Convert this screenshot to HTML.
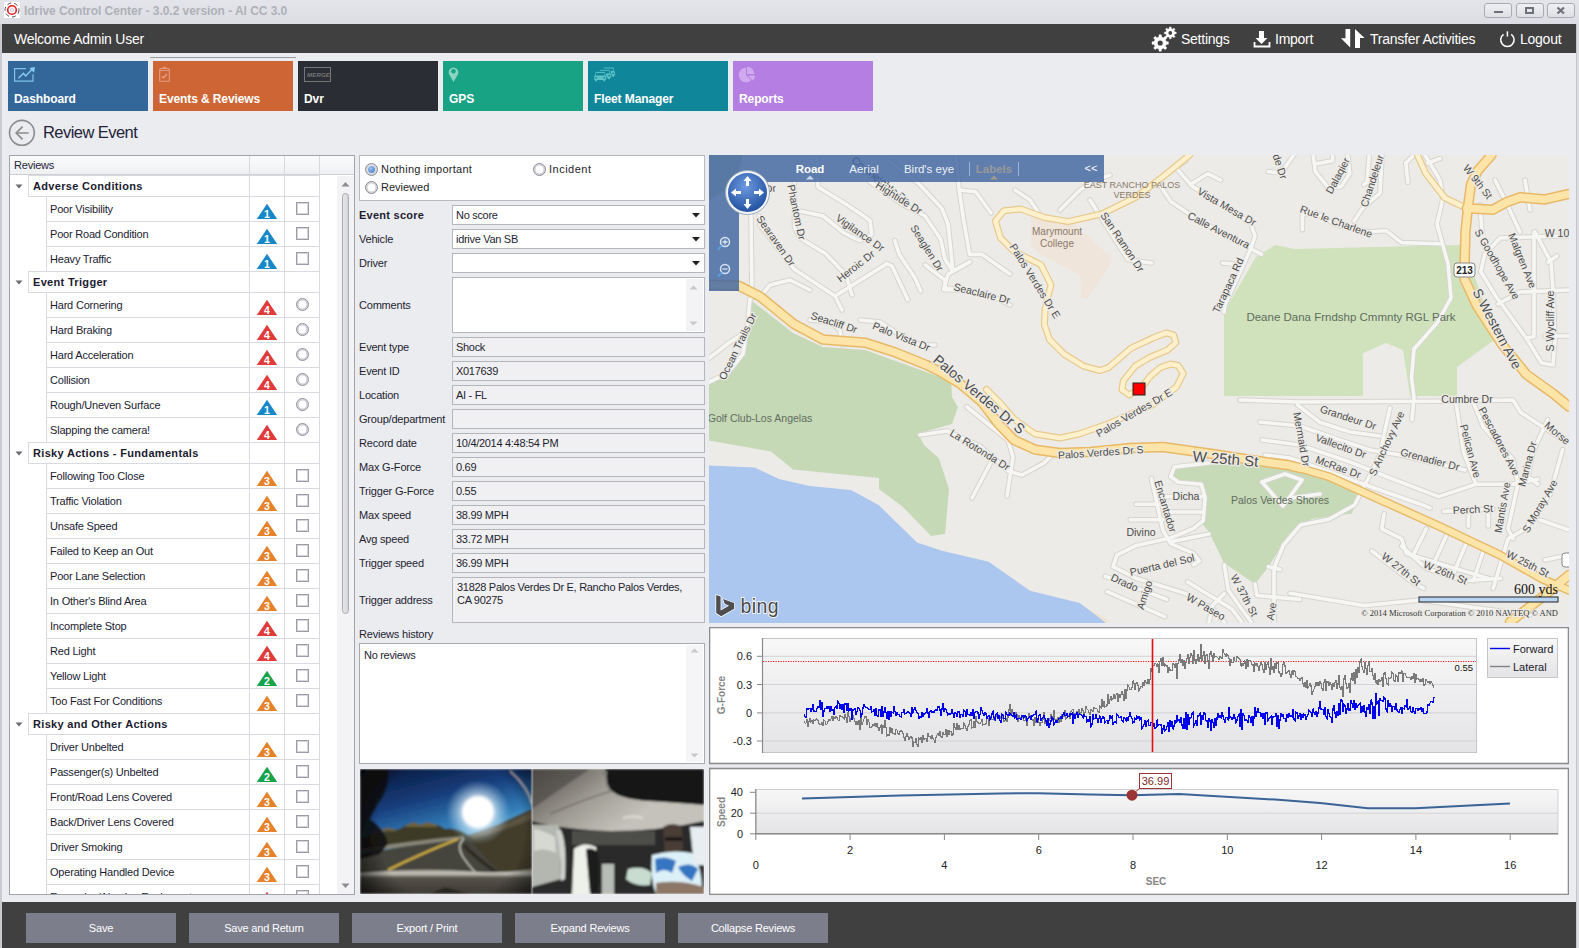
<!DOCTYPE html><html><head><meta charset='utf-8'><style>
*{box-sizing:border-box;margin:0;padding:0}
html,body{width:1579px;height:948px;overflow:hidden}
body{position:relative;background:#ebecf0;font-family:"Liberation Sans",sans-serif;font-size:11px;color:#1e1e28}
.a{position:absolute}
.t{position:absolute;white-space:nowrap;line-height:1}
</style></head><body>
<div class='a' style='left:0;top:0;width:1579px;height:24px;background:linear-gradient(#e4e5ea,#dcdde2)'></div>
<div class='a' style='left:4px;top:2px;width:16px;height:16px;background:#fff'></div>
<svg class='a' style='left:3px;top:1px' width='18' height='18'><circle cx='9' cy='9' r='7' fill='none' stroke='#555' stroke-width='1' stroke-dasharray='4 3'/><circle cx='9' cy='9' r='4.3' fill='none' stroke='#e21b23' stroke-width='1.6'/><circle cx='9' cy='9' r='1.5' fill='none' stroke='#bbb' stroke-width='0.8'/></svg>
<div class='t' style='left:24px;top:5px;font-size:12px;font-weight:bold;color:#aeb1b8;letter-spacing:-0.05px'>Idrive Control Center - 3.0.2 version - AI CC 3.0</div>
<div class='a' style='left:1484px;top:3px;width:28px;height:15px;border:1px solid #a9abb2;border-radius:3px;background:linear-gradient(#eeeff2,#dfe0e5)'></div>
<div class='a' style='left:1516px;top:3px;width:28px;height:15px;border:1px solid #a9abb2;border-radius:3px;background:linear-gradient(#eeeff2,#dfe0e5)'></div>
<div class='a' style='left:1547px;top:3px;width:28px;height:15px;border:1px solid #a9abb2;border-radius:3px;background:linear-gradient(#eeeff2,#dfe0e5)'></div>
<div class='a' style='left:1494px;top:11px;width:9px;height:2px;background:#6e717a'></div>
<div class='a' style='left:1525px;top:7px;width:9px;height:7px;border:2px solid #6e717a'></div>
<svg class='a' style='left:1555px;top:5px' width='12' height='11'><path d='M2.5 2.5 L9 8.5 M9 2.5 L2.5 8.5' stroke='#6e717a' stroke-width='2.2'/></svg>
<div class='a' style='left:0;top:24px;width:2px;height:924px;background:#c9cacf'></div>
<div class='a' style='left:1576px;top:24px;width:3px;height:924px;background:#dcdde2;border-left:1px solid #c4c5cb'></div>
<div class='a' style='left:2px;top:24px;width:1574px;height:29px;background:#404040'></div>
<div class='t' style='left:14px;top:32px;font-size:14px;color:#fff;letter-spacing:-0.25px'>Welcome Admin User</div>
<div class='t' style='left:1181px;top:32px;font-size:14px;color:#fff;letter-spacing:-0.25px'>Settings</div>
<div class='t' style='left:1275px;top:32px;font-size:14px;color:#fff;letter-spacing:-0.25px'>Import</div>
<div class='t' style='left:1370px;top:32px;font-size:14px;color:#fff;letter-spacing:-0.25px'>Transfer Activities</div>
<div class='t' style='left:1520px;top:32px;font-size:14px;color:#fff;letter-spacing:-0.25px'>Logout</div>
<svg class='a' style='left:1145px;top:24px' width='40' height='30' viewBox='1145 24 40 30'><polygon points='1158.82,37.02 1159.04,34.78 1161.36,34.78 1161.58,37.02 1163.45,37.79 1165.20,36.37 1166.83,38.00 1165.41,39.75 1166.18,41.62 1168.42,41.84 1168.42,44.16 1166.18,44.38 1165.41,46.25 1166.83,48.00 1165.20,49.63 1163.45,48.21 1161.58,48.98 1161.36,51.22 1159.04,51.22 1158.82,48.98 1156.95,48.21 1155.20,49.63 1153.57,48.00 1154.99,46.25 1154.22,44.38 1151.98,44.16 1151.98,41.84 1154.22,41.62 1154.99,39.75 1153.57,38.00 1155.20,36.37 1156.95,37.79' fill='#fff' stroke='#fff' stroke-width='0.4' stroke-linejoin='round'/><circle cx='1160.2' cy='43' r='2.6' fill='#404040'/><polygon points='1169.30,28.57 1169.46,26.96 1171.14,26.96 1171.30,28.57 1172.65,29.13 1173.91,28.11 1175.09,29.29 1174.07,30.55 1174.63,31.90 1176.24,32.06 1176.24,33.74 1174.63,33.90 1174.07,35.25 1175.09,36.51 1173.91,37.69 1172.65,36.67 1171.30,37.23 1171.14,38.84 1169.46,38.84 1169.30,37.23 1167.95,36.67 1166.69,37.69 1165.51,36.51 1166.53,35.25 1165.97,33.90 1164.36,33.74 1164.36,32.06 1165.97,31.90 1166.53,30.55 1165.51,29.29 1166.69,28.11 1167.95,29.13' fill='#fff' stroke='#fff' stroke-width='0.4' stroke-linejoin='round'/><circle cx='1170.3' cy='32.9' r='1.9' fill='#404040'/></svg>
<svg class='a' style='left:1252px;top:29px' width='20' height='20'><path d='M7 2h5v7h3.5l-6 6-6-6H7z' fill='#fff'/><path d='M2.5 13v4.5h15V13' fill='none' stroke='#fff' stroke-width='1.8'/></svg>
<svg class='a' style='left:1336px;top:24px' width='34' height='30' viewBox='1336 24 34 30'><path d='M1345.5 29H1350.2V47.4L1341 38.3H1345.5z' fill='#fff'/><path d='M1355 29L1364.6 38H1360V48H1355z' fill='#fff'/></svg>
<svg class='a' style='left:1494px;top:24px' width='30' height='30' viewBox='1494 24 30 30'><path d='M1503.56 34.31A6.7 6.7 0 1 0 1511.24 34.31' fill='none' stroke='#fff' stroke-width='1.5'/><path d='M1507.4 31.3V36.6' stroke='#fff' stroke-width='1.5'/></svg>
<div class='a' style='left:8px;top:61px;width:140px;height:50px;background:#336699'></div>
<div class='t' style='left:14px;top:93px;font-size:12px;font-weight:bold;color:#fff;letter-spacing:-0.1px'>Dashboard</div>
<div class='a' style='left:153px;top:61px;width:140px;height:50px;background:#cd6634'></div>
<div class='t' style='left:159px;top:93px;font-size:12px;font-weight:bold;color:#fff;letter-spacing:-0.1px'>Events &amp; Reviews</div>
<div class='a' style='left:298px;top:61px;width:140px;height:50px;background:#2a2d33'></div>
<div class='t' style='left:304px;top:93px;font-size:12px;font-weight:bold;color:#fff;letter-spacing:-0.1px'>Dvr</div>
<div class='a' style='left:443px;top:61px;width:140px;height:50px;background:#19a385'></div>
<div class='t' style='left:449px;top:93px;font-size:12px;font-weight:bold;color:#fff;letter-spacing:-0.1px'>GPS</div>
<div class='a' style='left:588px;top:61px;width:140px;height:50px;background:#0f869a'></div>
<div class='t' style='left:594px;top:93px;font-size:12px;font-weight:bold;color:#fff;letter-spacing:-0.1px'>Fleet Manager</div>
<div class='a' style='left:733px;top:61px;width:140px;height:50px;background:#b57ee3'></div>
<div class='t' style='left:739px;top:93px;font-size:12px;font-weight:bold;color:#fff;letter-spacing:-0.1px'>Reports</div>
<div class='a' style='left:150px;top:57px;width:146px;height:1px;background:#9a9ba0'></div>
<svg class='a' style='left:8px;top:61px' width='40' height='30' viewBox='8 61 40 30'><path d='M26 68.6H14.6V81.2H33V74.3' fill='none' stroke='#7dc3ea' stroke-width='1.2'/><path d='M18.4 78.2L23.5 73.3 25.6 76 32.5 69' fill='none' stroke='#88cdf2' stroke-width='1.4'/><path d='M35 67 L29.3 67.9 34.1 72.7z' fill='#88cdf2'/></svg>
<svg class='a' style='left:150px;top:61px' width='40' height='30' viewBox='150 61 40 30'><path d='M159.7 69.5V81.2H169.3V69.5L168.3 68.5H160.7z' fill='none' stroke='#e59c84' stroke-width='1.1'/><path d='M160 70.5H169' stroke='#e59c84' stroke-width='1'/><rect x='163' y='66.8' width='3' height='1.6' fill='#e59c84'/><path d='M161.9 76.2L163.6 77.8 166.9 74' fill='none' stroke='#e8a590' stroke-width='1.2'/></svg>
<div class='a' style='left:304px;top:67px;width:27px;height:15px;border:1px solid #777'></div>
<div class='t' style='left:307px;top:72px;font-size:6px;font-style:italic;font-weight:bold;color:#777;letter-spacing:0.2px'>MERGE</div>
<svg class='a' style='left:447px;top:66px' width='14' height='18'><path d='M6.5 16 L2.2 8.5 A4.8 4.8 0 1 1 10.8 8.5z' fill='#8ad5c2'/><circle cx='6.5' cy='5.3' r='2.3' fill='#19a385'/></svg>
<svg class='a' style='left:585px;top:61px' width='40' height='30' viewBox='585 61 40 30'><g transform='translate(602.5 66.5)'><path d='M1.8 0.6H10.2Q11.2 0.6 11.5 1.8L12.2 4.6Q12.8 5.2 12.8 6.5V9.6H11.6V11H9.4V9.6H3.4V11H1.2V9.6H0V6.5Q0 5.2 0.6 4.6L1.3 1.8Q1.6 0.6 1.8 0.6z' fill='#5ec3c6' stroke='#0f869a' stroke-width='0.9'/><path d='M2.4 1.9H10.4L11 4.6H1.8z' fill='#0f869a'/><circle cx='2.3' cy='6.8' r='0.9' fill='#0f869a'/><circle cx='10.5' cy='6.8' r='0.9' fill='#0f869a'/></g><g transform='translate(598.5 68.8)'><path d='M1.8 0.6H10.2Q11.2 0.6 11.5 1.8L12.2 4.6Q12.8 5.2 12.8 6.5V9.6H11.6V11H9.4V9.6H3.4V11H1.2V9.6H0V6.5Q0 5.2 0.6 4.6L1.3 1.8Q1.6 0.6 1.8 0.6z' fill='#5ec3c6' stroke='#0f869a' stroke-width='0.9'/><path d='M2.4 1.9H10.4L11 4.6H1.8z' fill='#0f869a'/><circle cx='2.3' cy='6.8' r='0.9' fill='#0f869a'/><circle cx='10.5' cy='6.8' r='0.9' fill='#0f869a'/></g><g transform='translate(593.8 71)'><path d='M1.8 0.6H10.2Q11.2 0.6 11.5 1.8L12.2 4.6Q12.8 5.2 12.8 6.5V9.6H11.6V11H9.4V9.6H3.4V11H1.2V9.6H0V6.5Q0 5.2 0.6 4.6L1.3 1.8Q1.6 0.6 1.8 0.6z' fill='#5ec3c6' stroke='#0f869a' stroke-width='0.9'/><path d='M2.4 1.9H10.4L11 4.6H1.8z' fill='#0f869a'/><circle cx='2.3' cy='6.8' r='0.9' fill='#0f869a'/><circle cx='10.5' cy='6.8' r='0.9' fill='#0f869a'/></g></svg>
<svg class='a' style='left:730px;top:61px' width='30' height='30' viewBox='730 61 30 30'><path d='M746 75V67.7A7.3 7.3 0 1 0 751.2 80.2z' fill='#d0aaee'/><path d='M747 74V66.7A7.3 7.3 0 0 1 754.3 74z' fill='#d0aaee'/><path d='M747.8 75.6H755A7.3 7.3 0 0 1 753 80.8z' fill='#d0aaee'/></svg>
<svg class='a' style='left:4px;top:116px' width='36' height='34' viewBox='4 116 36 34'><circle cx='21.9' cy='132.8' r='12.4' fill='none' stroke='#8c8c8c' stroke-width='1.6'/><path d='M28.7 133H16 M22.6 126.6 L16.2 133 L22.6 139.4' fill='none' stroke='#8c8c8c' stroke-width='1.7'/></svg>
<div class='t' style='left:43px;top:124px;font-size:16.5px;color:#23233a;letter-spacing:-0.55px'>Review Event</div>
<div class='a' style='left:9px;top:155px;width:346px;height:740px;border:1px solid #a3a4ab;background:#fff;overflow:hidden'>
<div class='a' style='left:0;top:0;width:344px;height:19px;background:linear-gradient(#fbfbfc,#eef0f3);border-bottom:1px solid #cfd0d6'></div>
<div class='t' style='left:4px;top:4px;font-size:11px;color:#24243a;letter-spacing:-0.2px'>Reviews</div>
<div class='a' style='left:239px;top:0;width:1px;height:19px;background:#d6d7dc'></div>
<div class='a' style='left:274px;top:0;width:1px;height:19px;background:#d6d7dc'></div>
<div class='a' style='left:309px;top:0;width:1px;height:19px;background:#d6d7dc'></div>
<div class='a' style='left:309px;top:19px;width:35px;height:720px;background:#fff'></div>
<div class='a' style='left:18px;top:19px;width:222px;height:22px;border:1px solid #d9dadf'></div>
<div class='a' style='left:239px;top:19px;width:36px;height:22px;border:1px solid #d9dadf'></div>
<div class='a' style='left:274px;top:19px;width:36px;height:22px;border:1px solid #d9dadf'></div>
<svg class='a' style='left:5px;top:28px' width='8' height='5'><path d='M0.5 0.5h7l-3.5 4z' fill='#6b6b70'/></svg>
<div class='t' style='left:23px;top:24.5px;font-size:11px;font-weight:bold;color:#1b1b30;letter-spacing:0.32px'>Adverse Conditions</div>
<div class='a' style='left:36px;top:40px;width:204px;height:26px;border:1px solid #d9dadf'></div>
<div class='a' style='left:239px;top:40px;width:36px;height:26px;border:1px solid #d9dadf'></div>
<div class='a' style='left:274px;top:40px;width:36px;height:26px;border:1px solid #d9dadf'></div>
<div class='t' style='left:40px;top:48px;font-size:11px;color:#1b1b30;letter-spacing:-0.2px'>Poor Visibility</div>
<svg class='a' style='left:246px;top:47px' width='22' height='17'><path d='M11 0.8 L21.2 16 H0.8z' fill='#1688c9'/><text x='11' y='15.2' font-size='10.5' font-weight='bold' fill='#fff' text-anchor='middle' font-family='Liberation Sans'>1</text></svg>
<div class='a' style='left:286px;top:46px;width:13px;height:13px;border:1px solid #9c9ca4;background:#fff;box-shadow:inset 0 0 0 1px #d6d6dc'></div>
<div class='a' style='left:36px;top:65px;width:204px;height:26px;border:1px solid #d9dadf'></div>
<div class='a' style='left:239px;top:65px;width:36px;height:26px;border:1px solid #d9dadf'></div>
<div class='a' style='left:274px;top:65px;width:36px;height:26px;border:1px solid #d9dadf'></div>
<div class='t' style='left:40px;top:73px;font-size:11px;color:#1b1b30;letter-spacing:-0.2px'>Poor Road Condition</div>
<svg class='a' style='left:246px;top:72px' width='22' height='17'><path d='M11 0.8 L21.2 16 H0.8z' fill='#1688c9'/><text x='11' y='15.2' font-size='10.5' font-weight='bold' fill='#fff' text-anchor='middle' font-family='Liberation Sans'>1</text></svg>
<div class='a' style='left:286px;top:71px;width:13px;height:13px;border:1px solid #9c9ca4;background:#fff;box-shadow:inset 0 0 0 1px #d6d6dc'></div>
<div class='a' style='left:36px;top:90px;width:204px;height:26px;border:1px solid #d9dadf'></div>
<div class='a' style='left:239px;top:90px;width:36px;height:26px;border:1px solid #d9dadf'></div>
<div class='a' style='left:274px;top:90px;width:36px;height:26px;border:1px solid #d9dadf'></div>
<div class='t' style='left:40px;top:98px;font-size:11px;color:#1b1b30;letter-spacing:-0.2px'>Heavy Traffic</div>
<svg class='a' style='left:246px;top:97px' width='22' height='17'><path d='M11 0.8 L21.2 16 H0.8z' fill='#1688c9'/><text x='11' y='15.2' font-size='10.5' font-weight='bold' fill='#fff' text-anchor='middle' font-family='Liberation Sans'>1</text></svg>
<div class='a' style='left:286px;top:96px;width:13px;height:13px;border:1px solid #9c9ca4;background:#fff;box-shadow:inset 0 0 0 1px #d6d6dc'></div>
<div class='a' style='left:18px;top:115px;width:222px;height:22px;border:1px solid #d9dadf'></div>
<div class='a' style='left:239px;top:115px;width:36px;height:22px;border:1px solid #d9dadf'></div>
<div class='a' style='left:274px;top:115px;width:36px;height:22px;border:1px solid #d9dadf'></div>
<svg class='a' style='left:5px;top:124px' width='8' height='5'><path d='M0.5 0.5h7l-3.5 4z' fill='#6b6b70'/></svg>
<div class='t' style='left:23px;top:120.5px;font-size:11px;font-weight:bold;color:#1b1b30;letter-spacing:0.32px'>Event Trigger</div>
<div class='a' style='left:36px;top:136px;width:204px;height:26px;border:1px solid #d9dadf'></div>
<div class='a' style='left:239px;top:136px;width:36px;height:26px;border:1px solid #d9dadf'></div>
<div class='a' style='left:274px;top:136px;width:36px;height:26px;border:1px solid #d9dadf'></div>
<div class='t' style='left:40px;top:144px;font-size:11px;color:#1b1b30;letter-spacing:-0.2px'>Hard Cornering</div>
<svg class='a' style='left:246px;top:143px' width='22' height='17'><path d='M11 0.8 L21.2 16 H0.8z' fill='#e03a3a'/><text x='11' y='15.2' font-size='10.5' font-weight='bold' fill='#fff' text-anchor='middle' font-family='Liberation Sans'>4</text></svg>
<div class='a' style='left:286px;top:142px;width:13px;height:13px;border:1px solid #8e8e96;border-radius:50%;background:#fff;box-shadow:inset 0 0 0 1.6px #cdced6'></div>
<div class='a' style='left:36px;top:161px;width:204px;height:26px;border:1px solid #d9dadf'></div>
<div class='a' style='left:239px;top:161px;width:36px;height:26px;border:1px solid #d9dadf'></div>
<div class='a' style='left:274px;top:161px;width:36px;height:26px;border:1px solid #d9dadf'></div>
<div class='t' style='left:40px;top:169px;font-size:11px;color:#1b1b30;letter-spacing:-0.2px'>Hard Braking</div>
<svg class='a' style='left:246px;top:168px' width='22' height='17'><path d='M11 0.8 L21.2 16 H0.8z' fill='#e03a3a'/><text x='11' y='15.2' font-size='10.5' font-weight='bold' fill='#fff' text-anchor='middle' font-family='Liberation Sans'>4</text></svg>
<div class='a' style='left:286px;top:167px;width:13px;height:13px;border:1px solid #8e8e96;border-radius:50%;background:#fff;box-shadow:inset 0 0 0 1.6px #cdced6'></div>
<div class='a' style='left:36px;top:186px;width:204px;height:26px;border:1px solid #d9dadf'></div>
<div class='a' style='left:239px;top:186px;width:36px;height:26px;border:1px solid #d9dadf'></div>
<div class='a' style='left:274px;top:186px;width:36px;height:26px;border:1px solid #d9dadf'></div>
<div class='t' style='left:40px;top:194px;font-size:11px;color:#1b1b30;letter-spacing:-0.2px'>Hard Acceleration</div>
<svg class='a' style='left:246px;top:193px' width='22' height='17'><path d='M11 0.8 L21.2 16 H0.8z' fill='#e03a3a'/><text x='11' y='15.2' font-size='10.5' font-weight='bold' fill='#fff' text-anchor='middle' font-family='Liberation Sans'>4</text></svg>
<div class='a' style='left:286px;top:192px;width:13px;height:13px;border:1px solid #8e8e96;border-radius:50%;background:#fff;box-shadow:inset 0 0 0 1.6px #cdced6'></div>
<div class='a' style='left:36px;top:211px;width:204px;height:26px;border:1px solid #d9dadf'></div>
<div class='a' style='left:239px;top:211px;width:36px;height:26px;border:1px solid #d9dadf'></div>
<div class='a' style='left:274px;top:211px;width:36px;height:26px;border:1px solid #d9dadf'></div>
<div class='t' style='left:40px;top:219px;font-size:11px;color:#1b1b30;letter-spacing:-0.2px'>Collision</div>
<svg class='a' style='left:246px;top:218px' width='22' height='17'><path d='M11 0.8 L21.2 16 H0.8z' fill='#e03a3a'/><text x='11' y='15.2' font-size='10.5' font-weight='bold' fill='#fff' text-anchor='middle' font-family='Liberation Sans'>4</text></svg>
<div class='a' style='left:286px;top:217px;width:13px;height:13px;border:1px solid #8e8e96;border-radius:50%;background:#fff;box-shadow:inset 0 0 0 1.6px #cdced6'></div>
<div class='a' style='left:36px;top:236px;width:204px;height:26px;border:1px solid #d9dadf'></div>
<div class='a' style='left:239px;top:236px;width:36px;height:26px;border:1px solid #d9dadf'></div>
<div class='a' style='left:274px;top:236px;width:36px;height:26px;border:1px solid #d9dadf'></div>
<div class='t' style='left:40px;top:244px;font-size:11px;color:#1b1b30;letter-spacing:-0.2px'>Rough/Uneven Surface</div>
<svg class='a' style='left:246px;top:243px' width='22' height='17'><path d='M11 0.8 L21.2 16 H0.8z' fill='#1688c9'/><text x='11' y='15.2' font-size='10.5' font-weight='bold' fill='#fff' text-anchor='middle' font-family='Liberation Sans'>1</text></svg>
<div class='a' style='left:286px;top:242px;width:13px;height:13px;border:1px solid #8e8e96;border-radius:50%;background:#fff;box-shadow:inset 0 0 0 1.6px #cdced6'></div>
<div class='a' style='left:36px;top:261px;width:204px;height:26px;border:1px solid #d9dadf'></div>
<div class='a' style='left:239px;top:261px;width:36px;height:26px;border:1px solid #d9dadf'></div>
<div class='a' style='left:274px;top:261px;width:36px;height:26px;border:1px solid #d9dadf'></div>
<div class='t' style='left:40px;top:269px;font-size:11px;color:#1b1b30;letter-spacing:-0.2px'>Slapping the camera!</div>
<svg class='a' style='left:246px;top:268px' width='22' height='17'><path d='M11 0.8 L21.2 16 H0.8z' fill='#e03a3a'/><text x='11' y='15.2' font-size='10.5' font-weight='bold' fill='#fff' text-anchor='middle' font-family='Liberation Sans'>4</text></svg>
<div class='a' style='left:286px;top:267px;width:13px;height:13px;border:1px solid #8e8e96;border-radius:50%;background:#fff;box-shadow:inset 0 0 0 1.6px #cdced6'></div>
<div class='a' style='left:18px;top:286px;width:222px;height:22px;border:1px solid #d9dadf'></div>
<div class='a' style='left:239px;top:286px;width:36px;height:22px;border:1px solid #d9dadf'></div>
<div class='a' style='left:274px;top:286px;width:36px;height:22px;border:1px solid #d9dadf'></div>
<svg class='a' style='left:5px;top:295px' width='8' height='5'><path d='M0.5 0.5h7l-3.5 4z' fill='#6b6b70'/></svg>
<div class='t' style='left:23px;top:291.5px;font-size:11px;font-weight:bold;color:#1b1b30;letter-spacing:0.32px'>Risky Actions - Fundamentals</div>
<div class='a' style='left:36px;top:307px;width:204px;height:26px;border:1px solid #d9dadf'></div>
<div class='a' style='left:239px;top:307px;width:36px;height:26px;border:1px solid #d9dadf'></div>
<div class='a' style='left:274px;top:307px;width:36px;height:26px;border:1px solid #d9dadf'></div>
<div class='t' style='left:40px;top:315px;font-size:11px;color:#1b1b30;letter-spacing:-0.2px'>Following Too Close</div>
<svg class='a' style='left:246px;top:314px' width='22' height='17'><path d='M11 0.8 L21.2 16 H0.8z' fill='#e5822b'/><text x='11' y='15.2' font-size='10.5' font-weight='bold' fill='#fff' text-anchor='middle' font-family='Liberation Sans'>3</text></svg>
<div class='a' style='left:286px;top:313px;width:13px;height:13px;border:1px solid #9c9ca4;background:#fff;box-shadow:inset 0 0 0 1px #d6d6dc'></div>
<div class='a' style='left:36px;top:332px;width:204px;height:26px;border:1px solid #d9dadf'></div>
<div class='a' style='left:239px;top:332px;width:36px;height:26px;border:1px solid #d9dadf'></div>
<div class='a' style='left:274px;top:332px;width:36px;height:26px;border:1px solid #d9dadf'></div>
<div class='t' style='left:40px;top:340px;font-size:11px;color:#1b1b30;letter-spacing:-0.2px'>Traffic Violation</div>
<svg class='a' style='left:246px;top:339px' width='22' height='17'><path d='M11 0.8 L21.2 16 H0.8z' fill='#e5822b'/><text x='11' y='15.2' font-size='10.5' font-weight='bold' fill='#fff' text-anchor='middle' font-family='Liberation Sans'>3</text></svg>
<div class='a' style='left:286px;top:338px;width:13px;height:13px;border:1px solid #9c9ca4;background:#fff;box-shadow:inset 0 0 0 1px #d6d6dc'></div>
<div class='a' style='left:36px;top:357px;width:204px;height:26px;border:1px solid #d9dadf'></div>
<div class='a' style='left:239px;top:357px;width:36px;height:26px;border:1px solid #d9dadf'></div>
<div class='a' style='left:274px;top:357px;width:36px;height:26px;border:1px solid #d9dadf'></div>
<div class='t' style='left:40px;top:365px;font-size:11px;color:#1b1b30;letter-spacing:-0.2px'>Unsafe Speed</div>
<svg class='a' style='left:246px;top:364px' width='22' height='17'><path d='M11 0.8 L21.2 16 H0.8z' fill='#e5822b'/><text x='11' y='15.2' font-size='10.5' font-weight='bold' fill='#fff' text-anchor='middle' font-family='Liberation Sans'>3</text></svg>
<div class='a' style='left:286px;top:363px;width:13px;height:13px;border:1px solid #9c9ca4;background:#fff;box-shadow:inset 0 0 0 1px #d6d6dc'></div>
<div class='a' style='left:36px;top:382px;width:204px;height:26px;border:1px solid #d9dadf'></div>
<div class='a' style='left:239px;top:382px;width:36px;height:26px;border:1px solid #d9dadf'></div>
<div class='a' style='left:274px;top:382px;width:36px;height:26px;border:1px solid #d9dadf'></div>
<div class='t' style='left:40px;top:390px;font-size:11px;color:#1b1b30;letter-spacing:-0.2px'>Failed to Keep an Out</div>
<svg class='a' style='left:246px;top:389px' width='22' height='17'><path d='M11 0.8 L21.2 16 H0.8z' fill='#e5822b'/><text x='11' y='15.2' font-size='10.5' font-weight='bold' fill='#fff' text-anchor='middle' font-family='Liberation Sans'>3</text></svg>
<div class='a' style='left:286px;top:388px;width:13px;height:13px;border:1px solid #9c9ca4;background:#fff;box-shadow:inset 0 0 0 1px #d6d6dc'></div>
<div class='a' style='left:36px;top:407px;width:204px;height:26px;border:1px solid #d9dadf'></div>
<div class='a' style='left:239px;top:407px;width:36px;height:26px;border:1px solid #d9dadf'></div>
<div class='a' style='left:274px;top:407px;width:36px;height:26px;border:1px solid #d9dadf'></div>
<div class='t' style='left:40px;top:415px;font-size:11px;color:#1b1b30;letter-spacing:-0.2px'>Poor Lane Selection</div>
<svg class='a' style='left:246px;top:414px' width='22' height='17'><path d='M11 0.8 L21.2 16 H0.8z' fill='#e5822b'/><text x='11' y='15.2' font-size='10.5' font-weight='bold' fill='#fff' text-anchor='middle' font-family='Liberation Sans'>3</text></svg>
<div class='a' style='left:286px;top:413px;width:13px;height:13px;border:1px solid #9c9ca4;background:#fff;box-shadow:inset 0 0 0 1px #d6d6dc'></div>
<div class='a' style='left:36px;top:432px;width:204px;height:26px;border:1px solid #d9dadf'></div>
<div class='a' style='left:239px;top:432px;width:36px;height:26px;border:1px solid #d9dadf'></div>
<div class='a' style='left:274px;top:432px;width:36px;height:26px;border:1px solid #d9dadf'></div>
<div class='t' style='left:40px;top:440px;font-size:11px;color:#1b1b30;letter-spacing:-0.2px'>In Other's Blind Area</div>
<svg class='a' style='left:246px;top:439px' width='22' height='17'><path d='M11 0.8 L21.2 16 H0.8z' fill='#e5822b'/><text x='11' y='15.2' font-size='10.5' font-weight='bold' fill='#fff' text-anchor='middle' font-family='Liberation Sans'>3</text></svg>
<div class='a' style='left:286px;top:438px;width:13px;height:13px;border:1px solid #9c9ca4;background:#fff;box-shadow:inset 0 0 0 1px #d6d6dc'></div>
<div class='a' style='left:36px;top:457px;width:204px;height:26px;border:1px solid #d9dadf'></div>
<div class='a' style='left:239px;top:457px;width:36px;height:26px;border:1px solid #d9dadf'></div>
<div class='a' style='left:274px;top:457px;width:36px;height:26px;border:1px solid #d9dadf'></div>
<div class='t' style='left:40px;top:465px;font-size:11px;color:#1b1b30;letter-spacing:-0.2px'>Incomplete Stop</div>
<svg class='a' style='left:246px;top:464px' width='22' height='17'><path d='M11 0.8 L21.2 16 H0.8z' fill='#e03a3a'/><text x='11' y='15.2' font-size='10.5' font-weight='bold' fill='#fff' text-anchor='middle' font-family='Liberation Sans'>4</text></svg>
<div class='a' style='left:286px;top:463px;width:13px;height:13px;border:1px solid #9c9ca4;background:#fff;box-shadow:inset 0 0 0 1px #d6d6dc'></div>
<div class='a' style='left:36px;top:482px;width:204px;height:26px;border:1px solid #d9dadf'></div>
<div class='a' style='left:239px;top:482px;width:36px;height:26px;border:1px solid #d9dadf'></div>
<div class='a' style='left:274px;top:482px;width:36px;height:26px;border:1px solid #d9dadf'></div>
<div class='t' style='left:40px;top:490px;font-size:11px;color:#1b1b30;letter-spacing:-0.2px'>Red Light</div>
<svg class='a' style='left:246px;top:489px' width='22' height='17'><path d='M11 0.8 L21.2 16 H0.8z' fill='#e03a3a'/><text x='11' y='15.2' font-size='10.5' font-weight='bold' fill='#fff' text-anchor='middle' font-family='Liberation Sans'>4</text></svg>
<div class='a' style='left:286px;top:488px;width:13px;height:13px;border:1px solid #9c9ca4;background:#fff;box-shadow:inset 0 0 0 1px #d6d6dc'></div>
<div class='a' style='left:36px;top:507px;width:204px;height:26px;border:1px solid #d9dadf'></div>
<div class='a' style='left:239px;top:507px;width:36px;height:26px;border:1px solid #d9dadf'></div>
<div class='a' style='left:274px;top:507px;width:36px;height:26px;border:1px solid #d9dadf'></div>
<div class='t' style='left:40px;top:515px;font-size:11px;color:#1b1b30;letter-spacing:-0.2px'>Yellow Light</div>
<svg class='a' style='left:246px;top:514px' width='22' height='17'><path d='M11 0.8 L21.2 16 H0.8z' fill='#16a34a'/><text x='11' y='15.2' font-size='10.5' font-weight='bold' fill='#fff' text-anchor='middle' font-family='Liberation Sans'>2</text></svg>
<div class='a' style='left:286px;top:513px;width:13px;height:13px;border:1px solid #9c9ca4;background:#fff;box-shadow:inset 0 0 0 1px #d6d6dc'></div>
<div class='a' style='left:36px;top:532px;width:204px;height:26px;border:1px solid #d9dadf'></div>
<div class='a' style='left:239px;top:532px;width:36px;height:26px;border:1px solid #d9dadf'></div>
<div class='a' style='left:274px;top:532px;width:36px;height:26px;border:1px solid #d9dadf'></div>
<div class='t' style='left:40px;top:540px;font-size:11px;color:#1b1b30;letter-spacing:-0.2px'>Too Fast For Conditions</div>
<svg class='a' style='left:246px;top:539px' width='22' height='17'><path d='M11 0.8 L21.2 16 H0.8z' fill='#e5822b'/><text x='11' y='15.2' font-size='10.5' font-weight='bold' fill='#fff' text-anchor='middle' font-family='Liberation Sans'>3</text></svg>
<div class='a' style='left:286px;top:538px;width:13px;height:13px;border:1px solid #9c9ca4;background:#fff;box-shadow:inset 0 0 0 1px #d6d6dc'></div>
<div class='a' style='left:18px;top:557px;width:222px;height:22px;border:1px solid #d9dadf'></div>
<div class='a' style='left:239px;top:557px;width:36px;height:22px;border:1px solid #d9dadf'></div>
<div class='a' style='left:274px;top:557px;width:36px;height:22px;border:1px solid #d9dadf'></div>
<svg class='a' style='left:5px;top:566px' width='8' height='5'><path d='M0.5 0.5h7l-3.5 4z' fill='#6b6b70'/></svg>
<div class='t' style='left:23px;top:562.5px;font-size:11px;font-weight:bold;color:#1b1b30;letter-spacing:0.32px'>Risky and Other Actions</div>
<div class='a' style='left:36px;top:578px;width:204px;height:26px;border:1px solid #d9dadf'></div>
<div class='a' style='left:239px;top:578px;width:36px;height:26px;border:1px solid #d9dadf'></div>
<div class='a' style='left:274px;top:578px;width:36px;height:26px;border:1px solid #d9dadf'></div>
<div class='t' style='left:40px;top:586px;font-size:11px;color:#1b1b30;letter-spacing:-0.2px'>Driver Unbelted</div>
<svg class='a' style='left:246px;top:585px' width='22' height='17'><path d='M11 0.8 L21.2 16 H0.8z' fill='#e5822b'/><text x='11' y='15.2' font-size='10.5' font-weight='bold' fill='#fff' text-anchor='middle' font-family='Liberation Sans'>3</text></svg>
<div class='a' style='left:286px;top:584px;width:13px;height:13px;border:1px solid #9c9ca4;background:#fff;box-shadow:inset 0 0 0 1px #d6d6dc'></div>
<div class='a' style='left:36px;top:603px;width:204px;height:26px;border:1px solid #d9dadf'></div>
<div class='a' style='left:239px;top:603px;width:36px;height:26px;border:1px solid #d9dadf'></div>
<div class='a' style='left:274px;top:603px;width:36px;height:26px;border:1px solid #d9dadf'></div>
<div class='t' style='left:40px;top:611px;font-size:11px;color:#1b1b30;letter-spacing:-0.2px'>Passenger(s) Unbelted</div>
<svg class='a' style='left:246px;top:610px' width='22' height='17'><path d='M11 0.8 L21.2 16 H0.8z' fill='#16a34a'/><text x='11' y='15.2' font-size='10.5' font-weight='bold' fill='#fff' text-anchor='middle' font-family='Liberation Sans'>2</text></svg>
<div class='a' style='left:286px;top:609px;width:13px;height:13px;border:1px solid #9c9ca4;background:#fff;box-shadow:inset 0 0 0 1px #d6d6dc'></div>
<div class='a' style='left:36px;top:628px;width:204px;height:26px;border:1px solid #d9dadf'></div>
<div class='a' style='left:239px;top:628px;width:36px;height:26px;border:1px solid #d9dadf'></div>
<div class='a' style='left:274px;top:628px;width:36px;height:26px;border:1px solid #d9dadf'></div>
<div class='t' style='left:40px;top:636px;font-size:11px;color:#1b1b30;letter-spacing:-0.2px'>Front/Road Lens Covered</div>
<svg class='a' style='left:246px;top:635px' width='22' height='17'><path d='M11 0.8 L21.2 16 H0.8z' fill='#e5822b'/><text x='11' y='15.2' font-size='10.5' font-weight='bold' fill='#fff' text-anchor='middle' font-family='Liberation Sans'>3</text></svg>
<div class='a' style='left:286px;top:634px;width:13px;height:13px;border:1px solid #9c9ca4;background:#fff;box-shadow:inset 0 0 0 1px #d6d6dc'></div>
<div class='a' style='left:36px;top:653px;width:204px;height:26px;border:1px solid #d9dadf'></div>
<div class='a' style='left:239px;top:653px;width:36px;height:26px;border:1px solid #d9dadf'></div>
<div class='a' style='left:274px;top:653px;width:36px;height:26px;border:1px solid #d9dadf'></div>
<div class='t' style='left:40px;top:661px;font-size:11px;color:#1b1b30;letter-spacing:-0.2px'>Back/Driver Lens Covered</div>
<svg class='a' style='left:246px;top:660px' width='22' height='17'><path d='M11 0.8 L21.2 16 H0.8z' fill='#e5822b'/><text x='11' y='15.2' font-size='10.5' font-weight='bold' fill='#fff' text-anchor='middle' font-family='Liberation Sans'>3</text></svg>
<div class='a' style='left:286px;top:659px;width:13px;height:13px;border:1px solid #9c9ca4;background:#fff;box-shadow:inset 0 0 0 1px #d6d6dc'></div>
<div class='a' style='left:36px;top:678px;width:204px;height:26px;border:1px solid #d9dadf'></div>
<div class='a' style='left:239px;top:678px;width:36px;height:26px;border:1px solid #d9dadf'></div>
<div class='a' style='left:274px;top:678px;width:36px;height:26px;border:1px solid #d9dadf'></div>
<div class='t' style='left:40px;top:686px;font-size:11px;color:#1b1b30;letter-spacing:-0.2px'>Driver Smoking</div>
<svg class='a' style='left:246px;top:685px' width='22' height='17'><path d='M11 0.8 L21.2 16 H0.8z' fill='#e5822b'/><text x='11' y='15.2' font-size='10.5' font-weight='bold' fill='#fff' text-anchor='middle' font-family='Liberation Sans'>3</text></svg>
<div class='a' style='left:286px;top:684px;width:13px;height:13px;border:1px solid #9c9ca4;background:#fff;box-shadow:inset 0 0 0 1px #d6d6dc'></div>
<div class='a' style='left:36px;top:703px;width:204px;height:26px;border:1px solid #d9dadf'></div>
<div class='a' style='left:239px;top:703px;width:36px;height:26px;border:1px solid #d9dadf'></div>
<div class='a' style='left:274px;top:703px;width:36px;height:26px;border:1px solid #d9dadf'></div>
<div class='t' style='left:40px;top:711px;font-size:11px;color:#1b1b30;letter-spacing:-0.2px'>Operating Handled Device</div>
<svg class='a' style='left:246px;top:710px' width='22' height='17'><path d='M11 0.8 L21.2 16 H0.8z' fill='#e5822b'/><text x='11' y='15.2' font-size='10.5' font-weight='bold' fill='#fff' text-anchor='middle' font-family='Liberation Sans'>3</text></svg>
<div class='a' style='left:286px;top:709px;width:13px;height:13px;border:1px solid #9c9ca4;background:#fff;box-shadow:inset 0 0 0 1px #d6d6dc'></div>
<div class='a' style='left:36px;top:728px;width:204px;height:26px;border:1px solid #d9dadf'></div>
<div class='a' style='left:239px;top:728px;width:36px;height:26px;border:1px solid #d9dadf'></div>
<div class='a' style='left:274px;top:728px;width:36px;height:26px;border:1px solid #d9dadf'></div>
<div class='t' style='left:40px;top:736px;font-size:11px;color:#1b1b30;letter-spacing:-0.2px'>Excessive/Abusive Equipment</div>
<svg class='a' style='left:246px;top:735px' width='22' height='17'><path d='M11 0.8 L21.2 16 H0.8z' fill='#e03a3a'/><text x='11' y='15.2' font-size='10.5' font-weight='bold' fill='#fff' text-anchor='middle' font-family='Liberation Sans'>4</text></svg>
<div class='a' style='left:286px;top:734px;width:13px;height:13px;border:1px solid #9c9ca4;background:#fff;box-shadow:inset 0 0 0 1px #d6d6dc'></div>
<div class='a' style='left:327px;top:20px;width:17px;height:718px;background:#f3f3f6'></div>
<svg class='a' style='left:331px;top:25px' width='9' height='6'><path d='M0.5 5.5h8l-4-4.5z' fill='#8a8a90'/></svg>
<svg class='a' style='left:331px;top:727px' width='9' height='6'><path d='M0.5 0.5h8l-4 4.5z' fill='#8a8a90'/></svg>
<div class='a' style='left:332px;top:37px;width:7px;height:421px;border:1px solid #a9aab2;border-radius:4px;background:linear-gradient(90deg,#e6e6ea,#d4d5da)'></div>
</div>
<div class='a' style='left:359px;top:155px;width:346px;height:46px;border:1px solid #b9bac0;background:#fff'></div>
<div class='a' style='left:365px;top:163px;width:13px;height:13px;border:1px solid #8a8a92;border-radius:50%;background:#fff;box-shadow:inset 0 0 0 1.6px #cfd0d8'></div>
<div class='a' style='left:368px;top:166px;width:7px;height:7px;border-radius:50%;background:radial-gradient(circle at 40% 35%,#9fc2ef,#3a6fc4)'></div>
<div class='a' style='left:533px;top:163px;width:13px;height:13px;border:1px solid #8a8a92;border-radius:50%;background:#fff;box-shadow:inset 0 0 0 1.6px #cfd0d8'></div>
<div class='a' style='left:365px;top:181px;width:13px;height:13px;border:1px solid #8a8a92;border-radius:50%;background:#fff;box-shadow:inset 0 0 0 1.6px #cfd0d8'></div>
<div class='t' style='left:381px;top:164px;letter-spacing:0.25px'>Nothing important</div>
<div class='t' style='left:549px;top:164px;letter-spacing:0.5px'>Incident</div>
<div class='t' style='left:381px;top:182px;letter-spacing:0px'>Reviewed</div>
<div class='t' style='left:359px;top:210px;font-weight:bold;letter-spacing:0.25px;;color:#1e1e30'>Event score</div>
<div class='t' style='left:359px;top:234px;letter-spacing:-0.2px;;color:#1e1e30'>Vehicle</div>
<div class='t' style='left:359px;top:258px;letter-spacing:-0.2px;;color:#1e1e30'>Driver</div>
<div class='t' style='left:359px;top:300px;letter-spacing:-0.2px;;color:#1e1e30'>Comments</div>
<div class='t' style='left:359px;top:342px;letter-spacing:-0.2px;;color:#1e1e30'>Event type</div>
<div class='t' style='left:359px;top:366px;letter-spacing:-0.2px;;color:#1e1e30'>Event ID</div>
<div class='t' style='left:359px;top:390px;letter-spacing:-0.2px;;color:#1e1e30'>Location</div>
<div class='t' style='left:359px;top:414px;letter-spacing:-0.2px;;color:#1e1e30'>Group/department</div>
<div class='t' style='left:359px;top:438px;letter-spacing:-0.2px;;color:#1e1e30'>Record date</div>
<div class='t' style='left:359px;top:462px;letter-spacing:-0.2px;;color:#1e1e30'>Max G-Force</div>
<div class='t' style='left:359px;top:486px;letter-spacing:-0.2px;;color:#1e1e30'>Trigger G-Force</div>
<div class='t' style='left:359px;top:510px;letter-spacing:-0.2px;;color:#1e1e30'>Max speed</div>
<div class='t' style='left:359px;top:534px;letter-spacing:-0.2px;;color:#1e1e30'>Avg speed</div>
<div class='t' style='left:359px;top:558px;letter-spacing:-0.2px;;color:#1e1e30'>Trigger speed</div>
<div class='t' style='left:359px;top:595px;letter-spacing:-0.2px;;color:#1e1e30'>Trigger address</div>
<div class='t' style='left:359px;top:629px;letter-spacing:-0.2px;;color:#1e1e30'>Reviews history</div>
<div class='a' style='left:452px;top:205px;width:253px;height:20px;border:1px solid #b4b5bb;background:#fff'></div>
<div class='t' style='left:456px;top:210px;letter-spacing:-0.3px;color:#1e1e30'>No score</div>
<svg class='a' style='left:692px;top:213px' width='8' height='5'><path d='M0 0h8l-4 4.5z' fill='#222'/></svg>
<div class='a' style='left:452px;top:229px;width:253px;height:20px;border:1px solid #b4b5bb;background:#fff'></div>
<div class='t' style='left:456px;top:234px;letter-spacing:-0.3px;color:#1e1e30'>idrive Van SB</div>
<svg class='a' style='left:692px;top:237px' width='8' height='5'><path d='M0 0h8l-4 4.5z' fill='#222'/></svg>
<div class='a' style='left:452px;top:253px;width:253px;height:20px;border:1px solid #b4b5bb;background:#fff'></div>
<svg class='a' style='left:692px;top:261px' width='8' height='5'><path d='M0 0h8l-4 4.5z' fill='#222'/></svg>
<div class='a' style='left:452px;top:277px;width:253px;height:56px;border:1px solid #b4b5bb;background:#fff'></div>
<div class='a' style='left:686px;top:279px;width:17px;height:52px;background:#f3f3f5'></div>
<svg class='a' style='left:689px;top:285px' width='9' height='5'><path d='M0.5 4.5h8l-4-4z' fill='#c8c8cc'/></svg>
<svg class='a' style='left:689px;top:321px' width='9' height='5'><path d='M0.5 0.5h8l-4 4z' fill='#c8c8cc'/></svg>
<div class='a' style='left:452px;top:337px;width:253px;height:20px;border:1px solid #b4b5bb;background:#f0f0f2'></div>
<div class='t' style='left:456px;top:342px;letter-spacing:-0.3px;color:#1e1e30'>Shock</div>
<div class='a' style='left:452px;top:361px;width:253px;height:20px;border:1px solid #b4b5bb;background:#f0f0f2'></div>
<div class='t' style='left:456px;top:366px;letter-spacing:-0.3px;color:#1e1e30'>X017639</div>
<div class='a' style='left:452px;top:385px;width:253px;height:20px;border:1px solid #b4b5bb;background:#f0f0f2'></div>
<div class='t' style='left:456px;top:390px;letter-spacing:-0.3px;color:#1e1e30'>AI - FL</div>
<div class='a' style='left:452px;top:409px;width:253px;height:20px;border:1px solid #b4b5bb;background:#f0f0f2'></div>
<div class='a' style='left:452px;top:433px;width:253px;height:20px;border:1px solid #b4b5bb;background:#f0f0f2'></div>
<div class='t' style='left:456px;top:438px;letter-spacing:-0.3px;color:#1e1e30'>10/4/2014 4:48:54 PM</div>
<div class='a' style='left:452px;top:457px;width:253px;height:20px;border:1px solid #b4b5bb;background:#f0f0f2'></div>
<div class='t' style='left:456px;top:462px;letter-spacing:-0.3px;color:#1e1e30'>0.69</div>
<div class='a' style='left:452px;top:481px;width:253px;height:20px;border:1px solid #b4b5bb;background:#f0f0f2'></div>
<div class='t' style='left:456px;top:486px;letter-spacing:-0.3px;color:#1e1e30'>0.55</div>
<div class='a' style='left:452px;top:505px;width:253px;height:20px;border:1px solid #b4b5bb;background:#f0f0f2'></div>
<div class='t' style='left:456px;top:510px;letter-spacing:-0.3px;color:#1e1e30'>38.99 MPH</div>
<div class='a' style='left:452px;top:529px;width:253px;height:20px;border:1px solid #b4b5bb;background:#f0f0f2'></div>
<div class='t' style='left:456px;top:534px;letter-spacing:-0.3px;color:#1e1e30'>33.72 MPH</div>
<div class='a' style='left:452px;top:553px;width:253px;height:20px;border:1px solid #b4b5bb;background:#f0f0f2'></div>
<div class='t' style='left:456px;top:558px;letter-spacing:-0.3px;color:#1e1e30'>36.99 MPH</div>
<div class='a' style='left:452px;top:577px;width:253px;height:46px;border:1px solid #b4b5bb;background:#f0f0f2'></div>
<div class='t' style='left:457px;top:581px;letter-spacing:-0.3px;color:#1e1e30;line-height:13px'>31828 Palos Verdes Dr E, Rancho Palos Verdes,<br>CA 90275</div>
<div class='a' style='left:359px;top:643px;width:346px;height:121px;border:1px solid #a9aab0;background:#fff'></div>
<div class='t' style='left:364px;top:650px;letter-spacing:-0.3px;color:#1e1e30'>No reviews</div>
<div class='a' style='left:686px;top:645px;width:17px;height:117px;background:#f5f5f7'></div>
<svg class='a' style='left:690px;top:648px' width='9' height='5'><path d='M0.5 4.5h8l-4-4z' fill='#c8c8cc'/></svg>
<svg class='a' style='left:690px;top:753px' width='9' height='5'><path d='M0.5 0.5h8l-4 4z' fill='#c8c8cc'/></svg>
<svg class='a' style='left:360px;top:769px' width='344' height='125' viewBox='0 0 344 125'>
<defs>
<linearGradient id='sky' x1='0' y1='0' x2='0.35' y2='1'><stop offset='0' stop-color='#091636'/><stop offset='0.32' stop-color='#163c7a'/><stop offset='0.58' stop-color='#3582bc'/><stop offset='0.78' stop-color='#9ad6ec'/></linearGradient>
<radialGradient id='sun' cx='118' cy='43' r='32' gradientUnits='userSpaceOnUse'><stop offset='0' stop-color='#fff'/><stop offset='0.45' stop-color='#fff'/><stop offset='0.56' stop-color='#eef9ff' stop-opacity='0.6'/><stop offset='1' stop-color='#bfe6f5' stop-opacity='0'/></radialGradient>
<radialGradient id='vig' cx='90' cy='60' r='118' gradientUnits='userSpaceOnUse'><stop offset='0.62' stop-color='#000' stop-opacity='0'/><stop offset='0.85' stop-color='#000' stop-opacity='0.55'/><stop offset='1' stop-color='#000' stop-opacity='0.95'/></radialGradient>
<linearGradient id='ceil' x1='0' y1='0' x2='1' y2='0.5'><stop offset='0' stop-color='#4e4a45'/><stop offset='0.45' stop-color='#9e9b93'/><stop offset='0.8' stop-color='#c4c2ba'/></linearGradient>
<linearGradient id='hood' x1='0' y1='0' x2='0' y2='1'><stop offset='0' stop-color='#8a877c'/><stop offset='0.18' stop-color='#c8c6bc'/><stop offset='0.35' stop-color='#55524a'/><stop offset='1' stop-color='#3e3a34'/></linearGradient>
<filter id='bl' x='0' y='0' width='1' height='1'><feGaussianBlur stdDeviation='0.9'/></filter>
<clipPath id='c1'><rect x='0' y='0' width='172' height='125'/></clipPath>
<clipPath id='c2'><rect x='172' y='0' width='172' height='125'/></clipPath>
</defs>
<g clip-path='url(#c1)'><g filter='url(#bl)'>
<rect x='0' y='0' width='172' height='125' fill='url(#sky)'/>
<path d='M0 70 Q20 62 40 60 Q50 52 60 57 Q75 52 85 60 Q95 58 108 66 L108 72 L0 80z' fill='#3e3a26'/>
<path d='M45 58 Q52 50 60 56 Q70 50 78 58z M18 62 Q28 56 38 62z' fill='#6e6238'/>
<path d='M104 68 Q120 62 140 55 Q160 45 172 40 L172 110 L120 100 Q110 80 104 68z' fill='#423d2c'/>
<path d='M110 66 Q130 62 150 52 Q160 48 172 42 L172 50 Q150 60 112 70z' fill='#5a5240'/>
<path d='M0 86 Q50 75 104 68 Q112 70 118 80 Q130 95 150 110 L172 115 L172 125 L0 125z' fill='#45443c'/>
<path d='M0 80 Q50 72 104 67 L104 70 Q50 76 0 84z' fill='#8a887a'/>
<path d='M28 101 Q60 85 98 70' stroke='#d6b240' stroke-width='2.4' fill='none'/>
<path d='M104 70 Q96 76 103 88 Q110 98 116 104' stroke='#d8d8cc' stroke-width='1.3' fill='none'/>
<path d='M104 76 Q118 92 150 112' stroke='#2a281e' stroke-width='3' fill='none'/>
<path d='M0 104 Q60 98 120 103 Q150 104 172 100 L172 125 L0 125z' fill='url(#hood)'/>
<path d='M85 118 L110 125 L70 125z' fill='#2a2620'/>
<path d='M0 0 L28 0 Q30 20 18 35 L10 50 Q25 60 28 75 L20 85 L0 90z' fill='#111' opacity='0.9'/>
<circle cx='118' cy='43' r='32' fill='url(#sun)'/>
<rect x='0' y='0' width='172' height='125' fill='url(#vig)'/>
<path d='M150 2 Q168 18 172 35' stroke='#f6d8b8' stroke-width='1.2' fill='none' opacity='0.7'/>
</g></g>
<g clip-path='url(#c2)'><g filter='url(#bl)'>
<rect x='172' y='0' width='172' height='125' fill='#2b2b29'/>
<path d='M172 0 H344 V52 Q300 62 250 62 Q200 60 172 52z' fill='url(#ceil)'/>
<path d='M172 0 H230 Q200 20 172 40z' fill='#4a4642' opacity='0.6'/>
<path d='M190 45 Q230 28 252 22' stroke='#5a5650' stroke-width='1' fill='none'/>
<path d='M245 0 H344 V36 Q320 34 290 32 Q258 30 250 20 Q243 10 245 0z' fill='#141414'/>
<path d='M246 2 Q244 15 251 24' stroke='#8a8a84' stroke-width='2' fill='none'/>
<path d='M263 49 Q272 46 283 49' stroke='#e0e0d8' stroke-width='2' fill='none'/>
<path d='M172 56 H199 L201 110 L172 118z' fill='#b4b6b0'/>
<path d='M174 60 Q186 62 195 68 L196 84 Q184 78 174 82z' fill='#d6d8d2'/>
<path d='M200 60 Q207 70 205 110 L201 112 Q201 80 196 62z' fill='#cfd3cf'/>
<path d='M212 62 H295 V76 H212z' fill='#4e4e48'/>
<path d='M214 80 Q224 72 236 78 L240 125 H212z' fill='#eef0ea'/>
<path d='M226 80 Q234 78 238 84 L240 125 H230z' fill='#1c1c1c'/>
<path d='M242 95 H254 V125 H242z' fill='#b8bcb6'/>
<path d='M268 100 Q283 96 292 104 L290 116 Q275 118 266 110z' fill='#c8dcd0'/>
<path d='M303 58 Q313 52 322 58 L323 80 Q315 90 305 84z' fill='#4a3e36'/>
<path d='M305 70 H322' stroke='#0a0a0a' stroke-width='3'/>
<path d='M292 86 Q312 80 332 84 Q342 95 342 125 H296 Q290 110 292 86z' fill='#dcf0f8'/>
<path d='M295 90 Q305 86 316 92 L312 104 Q304 98 296 104z M318 98 Q330 92 338 100 L332 112 Q322 106 318 98z' fill='#3476c2'/>
<path d='M296 114 Q320 110 344 118 V125 H296z' fill='#8c7666'/>
<path d='M330 58 H344 V96 H334z' fill='#e6eef2'/>
</g></g>
</svg>
<svg class='a' style='left:709px;top:155px' width='860' height='468' viewBox='709 155 860 468'>
<rect x='709' y='155' width='860' height='468' fill='#ecebe7'/>
<polygon points='709,381.8 728,373 743,354 747,329 750,299.5 793,333 823,347 865,350 926,372 951,381 952,397 958,407 952,424 918,433.5 924,445 939,458.5 949,489 947,512 945,534 931,536 903,507 879,489 879,478 793,469.5 771,451.6 709,440.6' fill='#c6d9b7'/>
<polygon points='709,155 743,155 738,175 725,190 709,200' fill='#c6d9b7'/>
<polygon points='1224,312 1256,257 1275,245 1295,249 1460,245 1465,250 1497,338 1457,367 1457,396 1410,396 1403,350 1386,343 1363,353 1363,396 1224,396' fill='#d0e2bc'/>
<polygon points='1172.5,468 1187,465 1272,464 1300,467 1360,491 1352,513.6 1312,519 1289,533.5 1268.5,566.7 1255,584 1224,563 1209,532 1203,524.5 1205,497.6 1201,484 1174.4,480' fill='#c6dab7'/>
<polygon points='1031,217.5 1071.4,221 1112,258 1108.5,268 1088,298.5 1081.5,298.5 1080,275 1041,254.7 1031,244.5' fill='#f0e5db'/>
<polygon points='1078.4,603.2 1111,622 1103.4,622' fill='#efe3cf'/>
<polygon points='709,465.4 754.6,467.6 779,479 809.7,486 851,490 878.6,505 917,542.5 942,550.8 988.7,561.8 1030,590.7 1079.7,603 1106,623 709,623' fill='#abc6ef'/>
<polyline points='750,299 747,329 743,354 728,373 709,382' fill='none' stroke='#d6d4ce' stroke-width='5.5' stroke-linejoin='round' stroke-linecap='round'/>
<polyline points='709,358 730,342 746,332' fill='none' stroke='#d6d4ce' stroke-width='5.5' stroke-linejoin='round' stroke-linecap='round'/>
<polyline points='760,297 770,285 790,280 810,290' fill='none' stroke='#d6d4ce' stroke-width='5.5' stroke-linejoin='round' stroke-linecap='round'/>
<polyline points='752,298 751,216 753,175' fill='none' stroke='#d6d4ce' stroke-width='5.5' stroke-linejoin='round' stroke-linecap='round'/>
<polyline points='759,216 760,225 794,269 835,296 842,310' fill='none' stroke='#d6d4ce' stroke-width='5.5' stroke-linejoin='round' stroke-linecap='round'/>
<polyline points='794.5,182 794.5,227 800,238 826,254 846,275 852,295' fill='none' stroke='#d6d4ce' stroke-width='5.5' stroke-linejoin='round' stroke-linecap='round'/>
<polyline points='835,296 887,263.6 892,266 908,300' fill='none' stroke='#d6d4ce' stroke-width='5.5' stroke-linejoin='round' stroke-linecap='round'/>
<polyline points='795,210 823,216 844,233 859.5,240.6 871.8,234.5 870,220.8 859.5,213 841,201 818,187 817,155' fill='none' stroke='#d6d4ce' stroke-width='5.5' stroke-linejoin='round' stroke-linecap='round'/>
<polyline points='868.7,181 902,204 925,216 940.6,239 945,259 952.8,271.2 969.6,262' fill='none' stroke='#d6d4ce' stroke-width='5.5' stroke-linejoin='round' stroke-linecap='round'/>
<polyline points='894.7,240.6 899.3,254.4 914.6,277.3 920.7,291' fill='none' stroke='#d6d4ce' stroke-width='5.5' stroke-linejoin='round' stroke-linecap='round'/>
<polyline points='925.3,265 945.2,280.4 945.2,288 963.5,290.3 990,295 1010,305' fill='none' stroke='#d6d4ce' stroke-width='5.5' stroke-linejoin='round' stroke-linecap='round'/>
<polyline points='887,159.6 917.6,182.5 942,208.5 948,224 951.3,254.4 952.8,271.2' fill='none' stroke='#d6d4ce' stroke-width='5.5' stroke-linejoin='round' stroke-linecap='round'/>
<polyline points='956,155 959,188.6 963.5,219.2 969.6,254.4 982,254.4 997,265 1010,274' fill='none' stroke='#d6d4ce' stroke-width='5.5' stroke-linejoin='round' stroke-linecap='round'/>
<polyline points='960.5,190.2 975.7,191.7 991,213' fill='none' stroke='#d6d4ce' stroke-width='5.5' stroke-linejoin='round' stroke-linecap='round'/>
<polyline points='969.6,262 948,274.3 943.6,289.6 963.5,290.3' fill='none' stroke='#d6d4ce' stroke-width='5.5' stroke-linejoin='round' stroke-linecap='round'/>
<polyline points='810,320 830,322 840,330 842,345' fill='none' stroke='#d6d4ce' stroke-width='5.5' stroke-linejoin='round' stroke-linecap='round'/>
<polyline points='860,320 880,322 900,335 920,345 935,345' fill='none' stroke='#d6d4ce' stroke-width='5.5' stroke-linejoin='round' stroke-linecap='round'/>
<polyline points='1060,210 1080,190 1095,180 1110,175' fill='none' stroke='#d6d4ce' stroke-width='5.5' stroke-linejoin='round' stroke-linecap='round'/>
<polyline points='1015,190 1030,200 1040,215' fill='none' stroke='#d6d4ce' stroke-width='5.5' stroke-linejoin='round' stroke-linecap='round'/>
<polyline points='1090,200 1128,259.8 1151.7,263' fill='none' stroke='#d6d4ce' stroke-width='5.5' stroke-linejoin='round' stroke-linecap='round'/>
<polyline points='1186,160.8 1175.4,167.2 1192.6,186.6 1229.2,208.1 1250.7,223.2 1255,236.1 1250.7,249 1224.9,305 1224,312' fill='none' stroke='#d6d4ce' stroke-width='5.5' stroke-linejoin='round' stroke-linecap='round'/>
<polyline points='1158.1,182.3 1171,201.7 1196.9,218.9 1240,242.6 1261.5,254.4' fill='none' stroke='#d6d4ce' stroke-width='5.5' stroke-linejoin='round' stroke-linecap='round'/>
<polyline points='1190.4,184.5 1207.7,173.7 1220.6,180.1' fill='none' stroke='#d6d4ce' stroke-width='5.5' stroke-linejoin='round' stroke-linecap='round'/>
<polyline points='1222.7,263 1233.5,264.1' fill='none' stroke='#d6d4ce' stroke-width='5.5' stroke-linejoin='round' stroke-linecap='round'/>
<polyline points='1302.4,229.7 1302.4,214.6 1315.3,212.4 1336.9,225.4 1369.2,231.8 1386.4,230.8 1401.5,242.6 1440,243.7' fill='none' stroke='#d6d4ce' stroke-width='5.5' stroke-linejoin='round' stroke-linecap='round'/>
<polyline points='1354.1,221.1 1362.7,208.1 1380,193.1 1382,156' fill='none' stroke='#d6d4ce' stroke-width='5.5' stroke-linejoin='round' stroke-linecap='round'/>
<polyline points='1313.2,155 1315.3,171.5 1328.3,187.7 1341.2,186.6 1349.8,173.7 1347.6,155' fill='none' stroke='#d6d4ce' stroke-width='5.5' stroke-linejoin='round' stroke-linecap='round'/>
<polyline points='1315,164 1332.6,160.8 1332.6,155' fill='none' stroke='#d6d4ce' stroke-width='5.5' stroke-linejoin='round' stroke-linecap='round'/>
<polyline points='1369.2,155 1367,182.3 1363.8,184.5' fill='none' stroke='#d6d4ce' stroke-width='5.5' stroke-linejoin='round' stroke-linecap='round'/>
<polyline points='1293.8,155 1285.2,167.2 1276.6,172.6 1268,171.5' fill='none' stroke='#d6d4ce' stroke-width='5.5' stroke-linejoin='round' stroke-linecap='round'/>
<polyline points='1405.8,162.9 1407.9,182.3' fill='none' stroke='#d6d4ce' stroke-width='5.5' stroke-linejoin='round' stroke-linecap='round'/>
<polyline points='1405.8,162.9 1414.4,155' fill='none' stroke='#d6d4ce' stroke-width='5.5' stroke-linejoin='round' stroke-linecap='round'/>
<polyline points='1427.3,163 1440,158.6' fill='none' stroke='#d6d4ce' stroke-width='5.5' stroke-linejoin='round' stroke-linecap='round'/>
<polyline points='1425,155 1440,180 1443,198 1437,224 1448,263.7 1451,297.8 1437,323 1414,349 1411.5,377.5 1414,397 1412,420' fill='none' stroke='#d6d4ce' stroke-width='5.5' stroke-linejoin='round' stroke-linecap='round'/>
<polyline points='1484.6,254.7 1480.8,271.8 1496,296.5 1526.4,338.3 1541.6,363 1553,365 1555,340 1553,290 1551,262 1535,232' fill='none' stroke='#d6d4ce' stroke-width='5.5' stroke-linejoin='round' stroke-linecap='round'/>
<polyline points='1484.6,254.7 1500,238 1560,236 1569,236' fill='none' stroke='#d6d4ce' stroke-width='5.5' stroke-linejoin='round' stroke-linecap='round'/>
<polyline points='1498,304 1520,292 1569,290' fill='none' stroke='#d6d4ce' stroke-width='5.5' stroke-linejoin='round' stroke-linecap='round'/>
<polyline points='1534,232 1534,336.4 1526.4,338.3' fill='none' stroke='#d6d4ce' stroke-width='5.5' stroke-linejoin='round' stroke-linecap='round'/>
<polyline points='1548,262 1557,256' fill='none' stroke='#d6d4ce' stroke-width='5.5' stroke-linejoin='round' stroke-linecap='round'/>
<polyline points='1545,336 1569,336' fill='none' stroke='#d6d4ce' stroke-width='5.5' stroke-linejoin='round' stroke-linecap='round'/>
<polyline points='1480,205 1482,232' fill='none' stroke='#d6d4ce' stroke-width='5.5' stroke-linejoin='round' stroke-linecap='round'/>
<polyline points='1495,180 1505,200 1520,232' fill='none' stroke='#d6d4ce' stroke-width='5.5' stroke-linejoin='round' stroke-linecap='round'/>
<polyline points='1525,180 1530,210' fill='none' stroke='#d6d4ce' stroke-width='5.5' stroke-linejoin='round' stroke-linecap='round'/>
<polyline points='1390,408 1385,430 1380,455 1370,475 1354.6,505 1329,519.3 1300.6,525 1283.5,545 1274,568 1274,622' fill='none' stroke='#d6d4ce' stroke-width='5.5' stroke-linejoin='round' stroke-linecap='round'/>
<polyline points='1240,400 1300,402 1438.7,401.2 1513,400 1520.5,412.3 1562.6,439.6' fill='none' stroke='#d6d4ce' stroke-width='5.5' stroke-linejoin='round' stroke-linecap='round'/>
<polyline points='1297.4,404.9 1319.7,422.2 1350,432 1380,436' fill='none' stroke='#d6d4ce' stroke-width='5.5' stroke-linejoin='round' stroke-linecap='round'/>
<polyline points='1260,422 1300,426 1340,440 1370,450 1400,455 1430,462 1465,470' fill='none' stroke='#d6d4ce' stroke-width='5.5' stroke-linejoin='round' stroke-linecap='round'/>
<polyline points='1262,440 1300,445 1350,462 1390,478 1438.7,496.6 1475.9,484.2 1513,484.2 1537.8,479.2' fill='none' stroke='#d6d4ce' stroke-width='5.5' stroke-linejoin='round' stroke-linecap='round'/>
<polyline points='1265,455 1290,458 1330,472 1380,490 1420,504 1430,508' fill='none' stroke='#d6d4ce' stroke-width='5.5' stroke-linejoin='round' stroke-linecap='round'/>
<polyline points='1456,402.4 1463.5,452 1475.9,484.2' fill='none' stroke='#d6d4ce' stroke-width='5.5' stroke-linejoin='round' stroke-linecap='round'/>
<polyline points='1473.4,402.4 1483.3,427.2 1513,459.4 1518,484.2 1508,528.8 1513,538.7' fill='none' stroke='#d6d4ce' stroke-width='5.5' stroke-linejoin='round' stroke-linecap='round'/>
<polyline points='1562.6,449.5 1550.2,494.1 1525.4,528.8 1508.1,538.7 1493.2,588.3' fill='none' stroke='#d6d4ce' stroke-width='5.5' stroke-linejoin='round' stroke-linecap='round'/>
<polyline points='1547.7,419.7 1532.9,452 1527.9,476.7 1537.8,484.2' fill='none' stroke='#d6d4ce' stroke-width='5.5' stroke-linejoin='round' stroke-linecap='round'/>
<polyline points='1443.7,511.4 1493.2,509' fill='none' stroke='#d6d4ce' stroke-width='5.5' stroke-linejoin='round' stroke-linecap='round'/>
<polyline points='1468.4,509 1468.4,526.3' fill='none' stroke='#d6d4ce' stroke-width='5.5' stroke-linejoin='round' stroke-linecap='round'/>
<polyline points='1488.3,509 1488.3,526' fill='none' stroke='#d6d4ce' stroke-width='5.5' stroke-linejoin='round' stroke-linecap='round'/>
<polyline points='1384.2,513.9 1381.7,528.8 1401.5,538.7 1406.5,553.6 1438.7,563.5 1488.3,578.4' fill='none' stroke='#d6d4ce' stroke-width='5.5' stroke-linejoin='round' stroke-linecap='round'/>
<polyline points='1426.3,528.8 1413.9,553.6' fill='none' stroke='#d6d4ce' stroke-width='5.5' stroke-linejoin='round' stroke-linecap='round'/>
<polyline points='1446.1,536.2 1433.7,563.5' fill='none' stroke='#d6d4ce' stroke-width='5.5' stroke-linejoin='round' stroke-linecap='round'/>
<polyline points='1466,543.7 1453.6,573.4' fill='none' stroke='#d6d4ce' stroke-width='5.5' stroke-linejoin='round' stroke-linecap='round'/>
<polyline points='1483.3,551 1473.4,580.8' fill='none' stroke='#d6d4ce' stroke-width='5.5' stroke-linejoin='round' stroke-linecap='round'/>
<polyline points='1371.8,551 1413.9,583.3 1423.8,588.3' fill='none' stroke='#d6d4ce' stroke-width='5.5' stroke-linejoin='round' stroke-linecap='round'/>
<polyline points='1401.5,546.1 1426.3,568.4 1463.5,580.8 1500.7,578.4' fill='none' stroke='#d6d4ce' stroke-width='5.5' stroke-linejoin='round' stroke-linecap='round'/>
<polyline points='1290,593.2 1364.3,605.6 1420,600 1470,607 1530,615' fill='none' stroke='#d6d4ce' stroke-width='5.5' stroke-linejoin='round' stroke-linecap='round'/>
<polyline points='1540,520 1569,530' fill='none' stroke='#d6d4ce' stroke-width='5.5' stroke-linejoin='round' stroke-linecap='round'/>
<polyline points='1545,560 1569,555' fill='none' stroke='#d6d4ce' stroke-width='5.5' stroke-linejoin='round' stroke-linecap='round'/>
<polyline points='1262,482 1285,474 1302,480 1283,506 1262,482' fill='none' stroke='#d6d4ce' stroke-width='5.5' stroke-linejoin='round' stroke-linecap='round'/>
<polyline points='1290,498 1320,494' fill='none' stroke='#d6d4ce' stroke-width='5.5' stroke-linejoin='round' stroke-linecap='round'/>
<polyline points='1151.4,478.4 1162.9,530.2 1170.6,543.7 1193.6,553.3 1199.4,561 1193.6,564.8' fill='none' stroke='#d6d4ce' stroke-width='5.5' stroke-linejoin='round' stroke-linecap='round'/>
<polyline points='1209,463 1174.4,466.9 1170.6,476.5 1178.2,482.2 1201.3,484.2 1205,497.6 1203.2,520.6 1193.6,528.3 1170.6,538 1136,545.6 1116.8,555.2 1113,566.7 1136,578.2 1186,593.6 1212.8,609 1224.3,622' fill='none' stroke='#d6d4ce' stroke-width='5.5' stroke-linejoin='round' stroke-linecap='round'/>
<polyline points='1136,504.3 1162.9,504.3' fill='none' stroke='#d6d4ce' stroke-width='5.5' stroke-linejoin='round' stroke-linecap='round'/>
<polyline points='1130.2,519.7 1163,519.7' fill='none' stroke='#d6d4ce' stroke-width='5.5' stroke-linejoin='round' stroke-linecap='round'/>
<polyline points='1166.7,496.6 1203.2,496.6' fill='none' stroke='#d6d4ce' stroke-width='5.5' stroke-linejoin='round' stroke-linecap='round'/>
<polyline points='1168.7,512 1203,512' fill='none' stroke='#d6d4ce' stroke-width='5.5' stroke-linejoin='round' stroke-linecap='round'/>
<polyline points='1170.6,541.8 1209,534' fill='none' stroke='#d6d4ce' stroke-width='5.5' stroke-linejoin='round' stroke-linecap='round'/>
<polyline points='1224.3,564.8 1228.2,589.8 1241.6,609 1251.2,622' fill='none' stroke='#d6d4ce' stroke-width='5.5' stroke-linejoin='round' stroke-linecap='round'/>
<polyline points='1268.5,566.7 1280,569.6' fill='none' stroke='#d6d4ce' stroke-width='5.5' stroke-linejoin='round' stroke-linecap='round'/>
<polyline points='1255,584 1257,595.5 1300,599.4' fill='none' stroke='#d6d4ce' stroke-width='5.5' stroke-linejoin='round' stroke-linecap='round'/>
<polyline points='1105.3,576.3 1166.7,599.4' fill='none' stroke='#d6d4ce' stroke-width='5.5' stroke-linejoin='round' stroke-linecap='round'/>
<polyline points='1107.2,591.7 1164.8,616.7' fill='none' stroke='#d6d4ce' stroke-width='5.5' stroke-linejoin='round' stroke-linecap='round'/>
<polyline points='1187.8,582 1232,609 1241.6,622' fill='none' stroke='#d6d4ce' stroke-width='5.5' stroke-linejoin='round' stroke-linecap='round'/>
<polyline points='1224.3,593.6 1212.8,605 1209,622' fill='none' stroke='#d6d4ce' stroke-width='5.5' stroke-linejoin='round' stroke-linecap='round'/>
<polyline points='920,435 947,431 980,446 1008,471 1022,475 1044,463 1052,455' fill='none' stroke='#d6d4ce' stroke-width='5.5' stroke-linejoin='round' stroke-linecap='round'/>
<polyline points='967,407 1008,440 1013,457 1007,496' fill='none' stroke='#d6d4ce' stroke-width='5.5' stroke-linejoin='round' stroke-linecap='round'/>
<polyline points='991,462 972,498' fill='none' stroke='#d6d4ce' stroke-width='5.5' stroke-linejoin='round' stroke-linecap='round'/>
<polyline points='750,299 747,329 743,354 728,373 709,382' fill='none' stroke='#f6f6f4' stroke-width='3.6' stroke-linejoin='round' stroke-linecap='round'/>
<polyline points='709,358 730,342 746,332' fill='none' stroke='#f6f6f4' stroke-width='3.6' stroke-linejoin='round' stroke-linecap='round'/>
<polyline points='760,297 770,285 790,280 810,290' fill='none' stroke='#f6f6f4' stroke-width='3.6' stroke-linejoin='round' stroke-linecap='round'/>
<polyline points='752,298 751,216 753,175' fill='none' stroke='#f6f6f4' stroke-width='3.6' stroke-linejoin='round' stroke-linecap='round'/>
<polyline points='759,216 760,225 794,269 835,296 842,310' fill='none' stroke='#f6f6f4' stroke-width='3.6' stroke-linejoin='round' stroke-linecap='round'/>
<polyline points='794.5,182 794.5,227 800,238 826,254 846,275 852,295' fill='none' stroke='#f6f6f4' stroke-width='3.6' stroke-linejoin='round' stroke-linecap='round'/>
<polyline points='835,296 887,263.6 892,266 908,300' fill='none' stroke='#f6f6f4' stroke-width='3.6' stroke-linejoin='round' stroke-linecap='round'/>
<polyline points='795,210 823,216 844,233 859.5,240.6 871.8,234.5 870,220.8 859.5,213 841,201 818,187 817,155' fill='none' stroke='#f6f6f4' stroke-width='3.6' stroke-linejoin='round' stroke-linecap='round'/>
<polyline points='868.7,181 902,204 925,216 940.6,239 945,259 952.8,271.2 969.6,262' fill='none' stroke='#f6f6f4' stroke-width='3.6' stroke-linejoin='round' stroke-linecap='round'/>
<polyline points='894.7,240.6 899.3,254.4 914.6,277.3 920.7,291' fill='none' stroke='#f6f6f4' stroke-width='3.6' stroke-linejoin='round' stroke-linecap='round'/>
<polyline points='925.3,265 945.2,280.4 945.2,288 963.5,290.3 990,295 1010,305' fill='none' stroke='#f6f6f4' stroke-width='3.6' stroke-linejoin='round' stroke-linecap='round'/>
<polyline points='887,159.6 917.6,182.5 942,208.5 948,224 951.3,254.4 952.8,271.2' fill='none' stroke='#f6f6f4' stroke-width='3.6' stroke-linejoin='round' stroke-linecap='round'/>
<polyline points='956,155 959,188.6 963.5,219.2 969.6,254.4 982,254.4 997,265 1010,274' fill='none' stroke='#f6f6f4' stroke-width='3.6' stroke-linejoin='round' stroke-linecap='round'/>
<polyline points='960.5,190.2 975.7,191.7 991,213' fill='none' stroke='#f6f6f4' stroke-width='3.6' stroke-linejoin='round' stroke-linecap='round'/>
<polyline points='969.6,262 948,274.3 943.6,289.6 963.5,290.3' fill='none' stroke='#f6f6f4' stroke-width='3.6' stroke-linejoin='round' stroke-linecap='round'/>
<polyline points='810,320 830,322 840,330 842,345' fill='none' stroke='#f6f6f4' stroke-width='3.6' stroke-linejoin='round' stroke-linecap='round'/>
<polyline points='860,320 880,322 900,335 920,345 935,345' fill='none' stroke='#f6f6f4' stroke-width='3.6' stroke-linejoin='round' stroke-linecap='round'/>
<polyline points='1060,210 1080,190 1095,180 1110,175' fill='none' stroke='#f6f6f4' stroke-width='3.6' stroke-linejoin='round' stroke-linecap='round'/>
<polyline points='1015,190 1030,200 1040,215' fill='none' stroke='#f6f6f4' stroke-width='3.6' stroke-linejoin='round' stroke-linecap='round'/>
<polyline points='1090,200 1128,259.8 1151.7,263' fill='none' stroke='#f6f6f4' stroke-width='3.6' stroke-linejoin='round' stroke-linecap='round'/>
<polyline points='1186,160.8 1175.4,167.2 1192.6,186.6 1229.2,208.1 1250.7,223.2 1255,236.1 1250.7,249 1224.9,305 1224,312' fill='none' stroke='#f6f6f4' stroke-width='3.6' stroke-linejoin='round' stroke-linecap='round'/>
<polyline points='1158.1,182.3 1171,201.7 1196.9,218.9 1240,242.6 1261.5,254.4' fill='none' stroke='#f6f6f4' stroke-width='3.6' stroke-linejoin='round' stroke-linecap='round'/>
<polyline points='1190.4,184.5 1207.7,173.7 1220.6,180.1' fill='none' stroke='#f6f6f4' stroke-width='3.6' stroke-linejoin='round' stroke-linecap='round'/>
<polyline points='1222.7,263 1233.5,264.1' fill='none' stroke='#f6f6f4' stroke-width='3.6' stroke-linejoin='round' stroke-linecap='round'/>
<polyline points='1302.4,229.7 1302.4,214.6 1315.3,212.4 1336.9,225.4 1369.2,231.8 1386.4,230.8 1401.5,242.6 1440,243.7' fill='none' stroke='#f6f6f4' stroke-width='3.6' stroke-linejoin='round' stroke-linecap='round'/>
<polyline points='1354.1,221.1 1362.7,208.1 1380,193.1 1382,156' fill='none' stroke='#f6f6f4' stroke-width='3.6' stroke-linejoin='round' stroke-linecap='round'/>
<polyline points='1313.2,155 1315.3,171.5 1328.3,187.7 1341.2,186.6 1349.8,173.7 1347.6,155' fill='none' stroke='#f6f6f4' stroke-width='3.6' stroke-linejoin='round' stroke-linecap='round'/>
<polyline points='1315,164 1332.6,160.8 1332.6,155' fill='none' stroke='#f6f6f4' stroke-width='3.6' stroke-linejoin='round' stroke-linecap='round'/>
<polyline points='1369.2,155 1367,182.3 1363.8,184.5' fill='none' stroke='#f6f6f4' stroke-width='3.6' stroke-linejoin='round' stroke-linecap='round'/>
<polyline points='1293.8,155 1285.2,167.2 1276.6,172.6 1268,171.5' fill='none' stroke='#f6f6f4' stroke-width='3.6' stroke-linejoin='round' stroke-linecap='round'/>
<polyline points='1405.8,162.9 1407.9,182.3' fill='none' stroke='#f6f6f4' stroke-width='3.6' stroke-linejoin='round' stroke-linecap='round'/>
<polyline points='1405.8,162.9 1414.4,155' fill='none' stroke='#f6f6f4' stroke-width='3.6' stroke-linejoin='round' stroke-linecap='round'/>
<polyline points='1427.3,163 1440,158.6' fill='none' stroke='#f6f6f4' stroke-width='3.6' stroke-linejoin='round' stroke-linecap='round'/>
<polyline points='1425,155 1440,180 1443,198 1437,224 1448,263.7 1451,297.8 1437,323 1414,349 1411.5,377.5 1414,397 1412,420' fill='none' stroke='#f6f6f4' stroke-width='3.6' stroke-linejoin='round' stroke-linecap='round'/>
<polyline points='1484.6,254.7 1480.8,271.8 1496,296.5 1526.4,338.3 1541.6,363 1553,365 1555,340 1553,290 1551,262 1535,232' fill='none' stroke='#f6f6f4' stroke-width='3.6' stroke-linejoin='round' stroke-linecap='round'/>
<polyline points='1484.6,254.7 1500,238 1560,236 1569,236' fill='none' stroke='#f6f6f4' stroke-width='3.6' stroke-linejoin='round' stroke-linecap='round'/>
<polyline points='1498,304 1520,292 1569,290' fill='none' stroke='#f6f6f4' stroke-width='3.6' stroke-linejoin='round' stroke-linecap='round'/>
<polyline points='1534,232 1534,336.4 1526.4,338.3' fill='none' stroke='#f6f6f4' stroke-width='3.6' stroke-linejoin='round' stroke-linecap='round'/>
<polyline points='1548,262 1557,256' fill='none' stroke='#f6f6f4' stroke-width='3.6' stroke-linejoin='round' stroke-linecap='round'/>
<polyline points='1545,336 1569,336' fill='none' stroke='#f6f6f4' stroke-width='3.6' stroke-linejoin='round' stroke-linecap='round'/>
<polyline points='1480,205 1482,232' fill='none' stroke='#f6f6f4' stroke-width='3.6' stroke-linejoin='round' stroke-linecap='round'/>
<polyline points='1495,180 1505,200 1520,232' fill='none' stroke='#f6f6f4' stroke-width='3.6' stroke-linejoin='round' stroke-linecap='round'/>
<polyline points='1525,180 1530,210' fill='none' stroke='#f6f6f4' stroke-width='3.6' stroke-linejoin='round' stroke-linecap='round'/>
<polyline points='1390,408 1385,430 1380,455 1370,475 1354.6,505 1329,519.3 1300.6,525 1283.5,545 1274,568 1274,622' fill='none' stroke='#f6f6f4' stroke-width='3.6' stroke-linejoin='round' stroke-linecap='round'/>
<polyline points='1240,400 1300,402 1438.7,401.2 1513,400 1520.5,412.3 1562.6,439.6' fill='none' stroke='#f6f6f4' stroke-width='3.6' stroke-linejoin='round' stroke-linecap='round'/>
<polyline points='1297.4,404.9 1319.7,422.2 1350,432 1380,436' fill='none' stroke='#f6f6f4' stroke-width='3.6' stroke-linejoin='round' stroke-linecap='round'/>
<polyline points='1260,422 1300,426 1340,440 1370,450 1400,455 1430,462 1465,470' fill='none' stroke='#f6f6f4' stroke-width='3.6' stroke-linejoin='round' stroke-linecap='round'/>
<polyline points='1262,440 1300,445 1350,462 1390,478 1438.7,496.6 1475.9,484.2 1513,484.2 1537.8,479.2' fill='none' stroke='#f6f6f4' stroke-width='3.6' stroke-linejoin='round' stroke-linecap='round'/>
<polyline points='1265,455 1290,458 1330,472 1380,490 1420,504 1430,508' fill='none' stroke='#f6f6f4' stroke-width='3.6' stroke-linejoin='round' stroke-linecap='round'/>
<polyline points='1456,402.4 1463.5,452 1475.9,484.2' fill='none' stroke='#f6f6f4' stroke-width='3.6' stroke-linejoin='round' stroke-linecap='round'/>
<polyline points='1473.4,402.4 1483.3,427.2 1513,459.4 1518,484.2 1508,528.8 1513,538.7' fill='none' stroke='#f6f6f4' stroke-width='3.6' stroke-linejoin='round' stroke-linecap='round'/>
<polyline points='1562.6,449.5 1550.2,494.1 1525.4,528.8 1508.1,538.7 1493.2,588.3' fill='none' stroke='#f6f6f4' stroke-width='3.6' stroke-linejoin='round' stroke-linecap='round'/>
<polyline points='1547.7,419.7 1532.9,452 1527.9,476.7 1537.8,484.2' fill='none' stroke='#f6f6f4' stroke-width='3.6' stroke-linejoin='round' stroke-linecap='round'/>
<polyline points='1443.7,511.4 1493.2,509' fill='none' stroke='#f6f6f4' stroke-width='3.6' stroke-linejoin='round' stroke-linecap='round'/>
<polyline points='1468.4,509 1468.4,526.3' fill='none' stroke='#f6f6f4' stroke-width='3.6' stroke-linejoin='round' stroke-linecap='round'/>
<polyline points='1488.3,509 1488.3,526' fill='none' stroke='#f6f6f4' stroke-width='3.6' stroke-linejoin='round' stroke-linecap='round'/>
<polyline points='1384.2,513.9 1381.7,528.8 1401.5,538.7 1406.5,553.6 1438.7,563.5 1488.3,578.4' fill='none' stroke='#f6f6f4' stroke-width='3.6' stroke-linejoin='round' stroke-linecap='round'/>
<polyline points='1426.3,528.8 1413.9,553.6' fill='none' stroke='#f6f6f4' stroke-width='3.6' stroke-linejoin='round' stroke-linecap='round'/>
<polyline points='1446.1,536.2 1433.7,563.5' fill='none' stroke='#f6f6f4' stroke-width='3.6' stroke-linejoin='round' stroke-linecap='round'/>
<polyline points='1466,543.7 1453.6,573.4' fill='none' stroke='#f6f6f4' stroke-width='3.6' stroke-linejoin='round' stroke-linecap='round'/>
<polyline points='1483.3,551 1473.4,580.8' fill='none' stroke='#f6f6f4' stroke-width='3.6' stroke-linejoin='round' stroke-linecap='round'/>
<polyline points='1371.8,551 1413.9,583.3 1423.8,588.3' fill='none' stroke='#f6f6f4' stroke-width='3.6' stroke-linejoin='round' stroke-linecap='round'/>
<polyline points='1401.5,546.1 1426.3,568.4 1463.5,580.8 1500.7,578.4' fill='none' stroke='#f6f6f4' stroke-width='3.6' stroke-linejoin='round' stroke-linecap='round'/>
<polyline points='1290,593.2 1364.3,605.6 1420,600 1470,607 1530,615' fill='none' stroke='#f6f6f4' stroke-width='3.6' stroke-linejoin='round' stroke-linecap='round'/>
<polyline points='1540,520 1569,530' fill='none' stroke='#f6f6f4' stroke-width='3.6' stroke-linejoin='round' stroke-linecap='round'/>
<polyline points='1545,560 1569,555' fill='none' stroke='#f6f6f4' stroke-width='3.6' stroke-linejoin='round' stroke-linecap='round'/>
<polyline points='1262,482 1285,474 1302,480 1283,506 1262,482' fill='none' stroke='#f6f6f4' stroke-width='3.6' stroke-linejoin='round' stroke-linecap='round'/>
<polyline points='1290,498 1320,494' fill='none' stroke='#f6f6f4' stroke-width='3.6' stroke-linejoin='round' stroke-linecap='round'/>
<polyline points='1151.4,478.4 1162.9,530.2 1170.6,543.7 1193.6,553.3 1199.4,561 1193.6,564.8' fill='none' stroke='#f6f6f4' stroke-width='3.6' stroke-linejoin='round' stroke-linecap='round'/>
<polyline points='1209,463 1174.4,466.9 1170.6,476.5 1178.2,482.2 1201.3,484.2 1205,497.6 1203.2,520.6 1193.6,528.3 1170.6,538 1136,545.6 1116.8,555.2 1113,566.7 1136,578.2 1186,593.6 1212.8,609 1224.3,622' fill='none' stroke='#f6f6f4' stroke-width='3.6' stroke-linejoin='round' stroke-linecap='round'/>
<polyline points='1136,504.3 1162.9,504.3' fill='none' stroke='#f6f6f4' stroke-width='3.6' stroke-linejoin='round' stroke-linecap='round'/>
<polyline points='1130.2,519.7 1163,519.7' fill='none' stroke='#f6f6f4' stroke-width='3.6' stroke-linejoin='round' stroke-linecap='round'/>
<polyline points='1166.7,496.6 1203.2,496.6' fill='none' stroke='#f6f6f4' stroke-width='3.6' stroke-linejoin='round' stroke-linecap='round'/>
<polyline points='1168.7,512 1203,512' fill='none' stroke='#f6f6f4' stroke-width='3.6' stroke-linejoin='round' stroke-linecap='round'/>
<polyline points='1170.6,541.8 1209,534' fill='none' stroke='#f6f6f4' stroke-width='3.6' stroke-linejoin='round' stroke-linecap='round'/>
<polyline points='1224.3,564.8 1228.2,589.8 1241.6,609 1251.2,622' fill='none' stroke='#f6f6f4' stroke-width='3.6' stroke-linejoin='round' stroke-linecap='round'/>
<polyline points='1268.5,566.7 1280,569.6' fill='none' stroke='#f6f6f4' stroke-width='3.6' stroke-linejoin='round' stroke-linecap='round'/>
<polyline points='1255,584 1257,595.5 1300,599.4' fill='none' stroke='#f6f6f4' stroke-width='3.6' stroke-linejoin='round' stroke-linecap='round'/>
<polyline points='1105.3,576.3 1166.7,599.4' fill='none' stroke='#f6f6f4' stroke-width='3.6' stroke-linejoin='round' stroke-linecap='round'/>
<polyline points='1107.2,591.7 1164.8,616.7' fill='none' stroke='#f6f6f4' stroke-width='3.6' stroke-linejoin='round' stroke-linecap='round'/>
<polyline points='1187.8,582 1232,609 1241.6,622' fill='none' stroke='#f6f6f4' stroke-width='3.6' stroke-linejoin='round' stroke-linecap='round'/>
<polyline points='1224.3,593.6 1212.8,605 1209,622' fill='none' stroke='#f6f6f4' stroke-width='3.6' stroke-linejoin='round' stroke-linecap='round'/>
<polyline points='920,435 947,431 980,446 1008,471 1022,475 1044,463 1052,455' fill='none' stroke='#f6f6f4' stroke-width='3.6' stroke-linejoin='round' stroke-linecap='round'/>
<polyline points='967,407 1008,440 1013,457 1007,496' fill='none' stroke='#f6f6f4' stroke-width='3.6' stroke-linejoin='round' stroke-linecap='round'/>
<polyline points='991,462 972,498' fill='none' stroke='#f6f6f4' stroke-width='3.6' stroke-linejoin='round' stroke-linecap='round'/>
<polyline points='1417.4,155 1425.7,173.3 1444.9,198 1466.8,208.3' fill='none' stroke='#e8c98c' stroke-width='7' stroke-linejoin='round' stroke-linecap='round'/>
<polyline points='986.4,389.5 1001,404 1014,419 1035,434 1060,438 1079,434 1108.6,423.7 1153,404.5 1176.5,386.8 1183.2,373.5 1178,365.4 1170.6,364 1160.3,367.6 1150,376.5 1141,388.3 1129.3,395 1121.9,389.7 1123.4,380.9 1135.2,366.1 1150,357.3 1167.7,349.9 1175.8,342.5 1173.6,335.1 1166.2,332.9 1152.9,338 1130.7,348.4 1108.6,367.6 1099.7,370.5 1083.5,366.1 1064.3,354.3 1049.5,339.5 1044.4,324.8 1045.1,310 1047.8,297 1051,285 1041,264.8 1014,251.3 1000.5,237.8 995.4,221 1003.9,210.8 1020.8,209 1044.4,217.5 1068,221.6 1101.8,214 1135.6,197.3 1162.6,177 1189.6,155' fill='none' stroke='#e8c98c' stroke-width='7' stroke-linejoin='round' stroke-linecap='round'/>
<polyline points='1417.4,155 1425.7,173.3 1444.9,198 1466.8,208.3' fill='none' stroke='#fdf1cd' stroke-width='4.6' stroke-linejoin='round' stroke-linecap='round'/>
<polyline points='986.4,389.5 1001,404 1014,419 1035,434 1060,438 1079,434 1108.6,423.7 1153,404.5 1176.5,386.8 1183.2,373.5 1178,365.4 1170.6,364 1160.3,367.6 1150,376.5 1141,388.3 1129.3,395 1121.9,389.7 1123.4,380.9 1135.2,366.1 1150,357.3 1167.7,349.9 1175.8,342.5 1173.6,335.1 1166.2,332.9 1152.9,338 1130.7,348.4 1108.6,367.6 1099.7,370.5 1083.5,366.1 1064.3,354.3 1049.5,339.5 1044.4,324.8 1045.1,310 1047.8,297 1051,285 1041,264.8 1014,251.3 1000.5,237.8 995.4,221 1003.9,210.8 1020.8,209 1044.4,217.5 1068,221.6 1101.8,214 1135.6,197.3 1162.6,177 1189.6,155' fill='none' stroke='#fdf1cd' stroke-width='4.6' stroke-linejoin='round' stroke-linecap='round'/>
<polyline points='709,284.8 738.8,285.8 759.9,296.4 793.6,323.8 823,339.6 865.4,342.8 895,352.3 926.6,365 940,371.6 961,384.3 982,402.2 998,423.3 1014,440 1035,449.6 1060,453 1090,452 1130,448 1163,447 1213,454 1258,461 1289,465.3 1300,468' fill='none' stroke='#e9b866' stroke-width='10.5' stroke-linejoin='round' stroke-linecap='round'/>
<polyline points='1491.5,155 1477.8,170.6 1471,184.3 1468.2,204.9 1465.4,232.3 1464.6,266.6 1464.6,279.4 1477,306 1501.7,344 1526.4,374.4 1553,393.4 1569,406.7' fill='none' stroke='#e9b866' stroke-width='10.5' stroke-linejoin='round' stroke-linecap='round'/>
<polyline points='1466.8,208.3 1492.9,209.7 1506.6,202.1 1520.3,197.3 1545,199.4 1569,193.9' fill='none' stroke='#e9b866' stroke-width='10.5' stroke-linejoin='round' stroke-linecap='round'/>
<polyline points='1510,622 1545,595 1569,575' fill='none' stroke='#e9b866' stroke-width='10.5' stroke-linejoin='round' stroke-linecap='round'/>
<polyline points='1296,467 1329,476.7 1386,502.3 1442.8,527.9 1499.6,554.9 1542.3,579 1569,590.4' fill='none' stroke='#e9b866' stroke-width='9' stroke-linejoin='round' stroke-linecap='round'/>
<polyline points='709,284.8 738.8,285.8 759.9,296.4 793.6,323.8 823,339.6 865.4,342.8 895,352.3 926.6,365 940,371.6 961,384.3 982,402.2 998,423.3 1014,440 1035,449.6 1060,453 1090,452 1130,448 1163,447 1213,454 1258,461 1289,465.3 1300,468' fill='none' stroke='#fde5aa' stroke-width='7.5' stroke-linejoin='round' stroke-linecap='round'/>
<polyline points='1491.5,155 1477.8,170.6 1471,184.3 1468.2,204.9 1465.4,232.3 1464.6,266.6 1464.6,279.4 1477,306 1501.7,344 1526.4,374.4 1553,393.4 1569,406.7' fill='none' stroke='#fde5aa' stroke-width='7.5' stroke-linejoin='round' stroke-linecap='round'/>
<polyline points='1466.8,208.3 1492.9,209.7 1506.6,202.1 1520.3,197.3 1545,199.4 1569,193.9' fill='none' stroke='#fde5aa' stroke-width='7.5' stroke-linejoin='round' stroke-linecap='round'/>
<polyline points='1510,622 1545,595 1569,575' fill='none' stroke='#fde5aa' stroke-width='7.5' stroke-linejoin='round' stroke-linecap='round'/>
<polyline points='1296,467 1329,476.7 1386,502.3 1442.8,527.9 1499.6,554.9 1542.3,579 1569,590.4' fill='none' stroke='#fde5aa' stroke-width='6.2' stroke-linejoin='round' stroke-linecap='round'/>
<text x='793' y='213' transform='rotate(78 793 213)' font-size='10.5' fill='#4c4c4c' text-anchor='middle' font-family='Liberation Sans' stroke='#ecebe7' stroke-width='2.5' paint-order='stroke'>Phantom Dr</text>
<text x='773' y='243' transform='rotate(55 773 243)' font-size='10.5' fill='#4c4c4c' text-anchor='middle' font-family='Liberation Sans' stroke='#ecebe7' stroke-width='2.5' paint-order='stroke'>Searaven Dr</text>
<text x='878' y='183' transform='rotate(38 878 183)' font-size='10.5' fill='#4c4c4c' text-anchor='middle' font-family='Liberation Sans' stroke='#ecebe7' stroke-width='2.5' paint-order='stroke'>Coolheights Dr</text>
<text x='897' y='201' transform='rotate(32 897 201)' font-size='10.5' fill='#4c4c4c' text-anchor='middle' font-family='Liberation Sans' stroke='#ecebe7' stroke-width='2.5' paint-order='stroke'>Hightide Dr</text>
<text x='858' y='236' transform='rotate(35 858 236)' font-size='10.5' fill='#4c4c4c' text-anchor='middle' font-family='Liberation Sans' stroke='#ecebe7' stroke-width='2.5' paint-order='stroke'>Vigilance Dr</text>
<text x='924' y='250' transform='rotate(58 924 250)' font-size='10.5' fill='#4c4c4c' text-anchor='middle' font-family='Liberation Sans' stroke='#ecebe7' stroke-width='2.5' paint-order='stroke'>Seaglen Dr</text>
<text x='858' y='269' transform='rotate(-38 858 269)' font-size='10.5' fill='#4c4c4c' text-anchor='middle' font-family='Liberation Sans' stroke='#ecebe7' stroke-width='2.5' paint-order='stroke'>Heroic Dr</text>
<text x='981' y='297' transform='rotate(14 981 297)' font-size='10.5' fill='#4c4c4c' text-anchor='middle' font-family='Liberation Sans' stroke='#ecebe7' stroke-width='2.5' paint-order='stroke'>Seaclaire Dr</text>
<text x='833' y='326' transform='rotate(18 833 326)' font-size='10.5' fill='#4c4c4c' text-anchor='middle' font-family='Liberation Sans' stroke='#ecebe7' stroke-width='2.5' paint-order='stroke'>Seacliff Dr</text>
<text x='900' y='340' transform='rotate(22 900 340)' font-size='10.5' fill='#4c4c4c' text-anchor='middle' font-family='Liberation Sans' stroke='#ecebe7' stroke-width='2.5' paint-order='stroke'>Palo Vista Dr</text>
<text x='741' y='348' transform='rotate(-64 741 348)' font-size='10.5' fill='#4c4c4c' text-anchor='middle' font-family='Liberation Sans' stroke='#ecebe7' stroke-width='2.5' paint-order='stroke'>Ocean Trails Dr</text>
<text x='978' y='453' transform='rotate(32 978 453)' font-size='10.5' fill='#4c4c4c' text-anchor='middle' font-family='Liberation Sans' stroke='#ecebe7' stroke-width='2.5' paint-order='stroke'>La Rotonda Dr</text>
<text x='1032' y='283' transform='rotate(58 1032 283)' font-size='10.5' fill='#4c4c4c' text-anchor='middle' font-family='Liberation Sans' stroke='#ecebe7' stroke-width='2.5' paint-order='stroke'>Palos Verdes Dr E</text>
<text x='1119.4' y='244' transform='rotate(56 1119.4 244)' font-size='10.5' fill='#4c4c4c' text-anchor='middle' font-family='Liberation Sans' stroke='#ecebe7' stroke-width='2.5' paint-order='stroke'>San Ramon Dr</text>
<text x='1225' y='210' transform='rotate(30 1225 210)' font-size='10.5' fill='#4c4c4c' text-anchor='middle' font-family='Liberation Sans' stroke='#ecebe7' stroke-width='2.5' paint-order='stroke'>Vista Mesa Dr</text>
<text x='1217' y='233.5' transform='rotate(27 1217 233.5)' font-size='10.5' fill='#4c4c4c' text-anchor='middle' font-family='Liberation Sans' stroke='#ecebe7' stroke-width='2.5' paint-order='stroke'>Calle Aventura</text>
<text x='1335' y='225' transform='rotate(20 1335 225)' font-size='10.5' fill='#4c4c4c' text-anchor='middle' font-family='Liberation Sans' stroke='#ecebe7' stroke-width='2.5' paint-order='stroke'>Rue le Charlene</text>
<text x='1341' y='177.5' transform='rotate(-62 1341 177.5)' font-size='10.5' fill='#4c4c4c' text-anchor='middle' font-family='Liberation Sans' stroke='#ecebe7' stroke-width='2.5' paint-order='stroke'>Dalaqier</text>
<text x='1375.6' y='182' transform='rotate(-72 1375.6 182)' font-size='10.5' fill='#4c4c4c' text-anchor='middle' font-family='Liberation Sans' stroke='#ecebe7' stroke-width='2.5' paint-order='stroke'>Chandeleur</text>
<text x='1475' y='184' transform='rotate(52 1475 184)' font-size='10.5' fill='#4c4c4c' text-anchor='middle' font-family='Liberation Sans' stroke='#ecebe7' stroke-width='2.5' paint-order='stroke'>W 9th St</text>
<text x='1494' y='266' transform='rotate(60 1494 266)' font-size='10.5' fill='#4c4c4c' text-anchor='middle' font-family='Liberation Sans' stroke='#ecebe7' stroke-width='2.5' paint-order='stroke'>S Goodhope Ave</text>
<text x='1519' y='262' transform='rotate(68 1519 262)' font-size='10.5' fill='#4c4c4c' text-anchor='middle' font-family='Liberation Sans' stroke='#ecebe7' stroke-width='2.5' paint-order='stroke'>Malgren Ave</text>
<text x='1554' y='321' transform='rotate(-90 1554 321)' font-size='10.5' fill='#4c4c4c' text-anchor='middle' font-family='Liberation Sans' stroke='#ecebe7' stroke-width='2.5' paint-order='stroke'>S Wycliff Ave</text>
<text x='1231.4' y='287' transform='rotate(-65 1231.4 287)' font-size='10.5' fill='#4c4c4c' text-anchor='middle' font-family='Liberation Sans' stroke='#ecebe7' stroke-width='2.5' paint-order='stroke'>Tarapaca Rd</text>
<text x='1136' y='416' transform='rotate(-30 1136 416)' font-size='10.5' fill='#4c4c4c' text-anchor='middle' font-family='Liberation Sans' stroke='#ecebe7' stroke-width='2.5' paint-order='stroke'>Palos Verdes Dr E</text>
<text x='1101' y='456' transform='rotate(-4 1101 456)' font-size='10.5' fill='#4c4c4c' text-anchor='middle' font-family='Liberation Sans' stroke='#ecebe7' stroke-width='2.5' paint-order='stroke'>Palos Verdes Dr S</text>
<text x='1467' y='403' transform='rotate(0 1467 403)' font-size='10.5' fill='#4c4c4c' text-anchor='middle' font-family='Liberation Sans' stroke='#ecebe7' stroke-width='2.5' paint-order='stroke'>Cumbre Dr</text>
<text x='1347' y='421' transform='rotate(18 1347 421)' font-size='10.5' fill='#4c4c4c' text-anchor='middle' font-family='Liberation Sans' stroke='#ecebe7' stroke-width='2.5' paint-order='stroke'>Grandeur Dr</text>
<text x='1339.6' y='449.5' transform='rotate(20 1339.6 449.5)' font-size='10.5' fill='#4c4c4c' text-anchor='middle' font-family='Liberation Sans' stroke='#ecebe7' stroke-width='2.5' paint-order='stroke'>Vallecito Dr</text>
<text x='1337' y='470.5' transform='rotate(20 1337 470.5)' font-size='10.5' fill='#4c4c4c' text-anchor='middle' font-family='Liberation Sans' stroke='#ecebe7' stroke-width='2.5' paint-order='stroke'>McRae Dr</text>
<text x='1298' y='440' transform='rotate(80 1298 440)' font-size='10.5' fill='#4c4c4c' text-anchor='middle' font-family='Liberation Sans' stroke='#ecebe7' stroke-width='2.5' paint-order='stroke'>Mermaid Dr</text>
<text x='1390' y='445' transform='rotate(-65 1390 445)' font-size='10.5' fill='#4c4c4c' text-anchor='middle' font-family='Liberation Sans' stroke='#ecebe7' stroke-width='2.5' paint-order='stroke'>S Anchovy Ave</text>
<text x='1429' y='463' transform='rotate(15 1429 463)' font-size='10.5' fill='#4c4c4c' text-anchor='middle' font-family='Liberation Sans' stroke='#ecebe7' stroke-width='2.5' paint-order='stroke'>Grenadier Dr</text>
<text x='1467' y='452' transform='rotate(75 1467 452)' font-size='10.5' fill='#4c4c4c' text-anchor='middle' font-family='Liberation Sans' stroke='#ecebe7' stroke-width='2.5' paint-order='stroke'>Pelican Ave</text>
<text x='1496' y='443' transform='rotate(62 1496 443)' font-size='10.5' fill='#4c4c4c' text-anchor='middle' font-family='Liberation Sans' stroke='#ecebe7' stroke-width='2.5' paint-order='stroke'>Pescadores Ave</text>
<text x='1531' y='465' transform='rotate(-75 1531 465)' font-size='10.5' fill='#4c4c4c' text-anchor='middle' font-family='Liberation Sans' stroke='#ecebe7' stroke-width='2.5' paint-order='stroke'>Marina Dr</text>
<text x='1473' y='513' transform='rotate(-3 1473 513)' font-size='10.5' fill='#4c4c4c' text-anchor='middle' font-family='Liberation Sans' stroke='#ecebe7' stroke-width='2.5' paint-order='stroke'>Perch St</text>
<text x='1506' y='508' transform='rotate(-80 1506 508)' font-size='10.5' fill='#4c4c4c' text-anchor='middle' font-family='Liberation Sans' stroke='#ecebe7' stroke-width='2.5' paint-order='stroke'>Mantis Ave</text>
<text x='1543' y='508' transform='rotate(-60 1543 508)' font-size='10.5' fill='#4c4c4c' text-anchor='middle' font-family='Liberation Sans' stroke='#ecebe7' stroke-width='2.5' paint-order='stroke'>S Moray Ave</text>
<text x='1162' y='507.5' transform='rotate(73 1162 507.5)' font-size='10.5' fill='#4c4c4c' text-anchor='middle' font-family='Liberation Sans' stroke='#ecebe7' stroke-width='2.5' paint-order='stroke'>Encantador</text>
<text x='1186' y='499.5' transform='rotate(0 1186 499.5)' font-size='10.5' fill='#4c4c4c' text-anchor='middle' font-family='Liberation Sans' stroke='#ecebe7' stroke-width='2.5' paint-order='stroke'>Dicha</text>
<text x='1141' y='536' transform='rotate(0 1141 536)' font-size='10.5' fill='#4c4c4c' text-anchor='middle' font-family='Liberation Sans' stroke='#ecebe7' stroke-width='2.5' paint-order='stroke'>Divino</text>
<text x='1163' y='568.5' transform='rotate(-13 1163 568.5)' font-size='10.5' fill='#4c4c4c' text-anchor='middle' font-family='Liberation Sans' stroke='#ecebe7' stroke-width='2.5' paint-order='stroke'>Puerta del Sol</text>
<text x='1123' y='586' transform='rotate(25 1123 586)' font-size='10.5' fill='#4c4c4c' text-anchor='middle' font-family='Liberation Sans' stroke='#ecebe7' stroke-width='2.5' paint-order='stroke'>Drado</text>
<text x='1148' y='596' transform='rotate(-72 1148 596)' font-size='10.5' fill='#4c4c4c' text-anchor='middle' font-family='Liberation Sans' stroke='#ecebe7' stroke-width='2.5' paint-order='stroke'>Amigo</text>
<text x='1241' y='597' transform='rotate(62 1241 597)' font-size='10.5' fill='#4c4c4c' text-anchor='middle' font-family='Liberation Sans' stroke='#ecebe7' stroke-width='2.5' paint-order='stroke'>W 37th St</text>
<text x='1204' y='610' transform='rotate(30 1204 610)' font-size='10.5' fill='#4c4c4c' text-anchor='middle' font-family='Liberation Sans' stroke='#ecebe7' stroke-width='2.5' paint-order='stroke'>W Paseo</text>
<text x='1399' y='572' transform='rotate(38 1399 572)' font-size='10.5' fill='#4c4c4c' text-anchor='middle' font-family='Liberation Sans' stroke='#ecebe7' stroke-width='2.5' paint-order='stroke'>W 27th St</text>
<text x='1444' y='576' transform='rotate(22 1444 576)' font-size='10.5' fill='#4c4c4c' text-anchor='middle' font-family='Liberation Sans' stroke='#ecebe7' stroke-width='2.5' paint-order='stroke'>W 26th St</text>
<text x='1526' y='567' transform='rotate(27 1526 567)' font-size='10.5' fill='#4c4c4c' text-anchor='middle' font-family='Liberation Sans' stroke='#ecebe7' stroke-width='2.5' paint-order='stroke'>W 25th St</text>
<text x='1275' y='612' transform='rotate(-80 1275 612)' font-size='10.5' fill='#4c4c4c' text-anchor='middle' font-family='Liberation Sans' stroke='#ecebe7' stroke-width='2.5' paint-order='stroke'>Ave</text>
<text x='1276' y='166' transform='rotate(72 1276 166)' font-size='10.5' fill='#4c4c4c' text-anchor='middle' font-family='Liberation Sans' stroke='#ecebe7' stroke-width='2.5' paint-order='stroke'>rde Dr</text>
<text x='1557' y='237' transform='rotate(0 1557 237)' font-size='10.5' fill='#4c4c4c' text-anchor='middle' font-family='Liberation Sans' stroke='#ecebe7' stroke-width='2.5' paint-order='stroke'>W 10</text>
<text x='1555' y='436' transform='rotate(40 1555 436)' font-size='10.5' fill='#4c4c4c' text-anchor='middle' font-family='Liberation Sans' stroke='#ecebe7' stroke-width='2.5' paint-order='stroke'>Morse</text>
<text x='762' y='193' transform='rotate(-5 762 193)' font-size='10.5' fill='#4c4c4c' text-anchor='middle' font-family='Liberation Sans' stroke='#ecebe7' stroke-width='2.5' paint-order='stroke'>ate Dr</text>
<text x='976' y='398' transform='rotate(40 976 398)' font-size='14' fill='#4c4c4c' text-anchor='middle' font-family='Liberation Sans' stroke='#ecebe7' stroke-width='2.5' paint-order='stroke'>Palos Verdes Dr S</text>
<text x='1225' y='464' transform='rotate(5 1225 464)' font-size='15' fill='#4c4c4c' text-anchor='middle' font-family='Liberation Sans' stroke='#ecebe7' stroke-width='2.5' paint-order='stroke'>W 25th St</text>
<text x='1493' y='331' transform='rotate(62 1493 331)' font-size='13.5' fill='#4c4c4c' text-anchor='middle' font-family='Liberation Sans' stroke='#ecebe7' stroke-width='2.5' paint-order='stroke'>S Western Ave</text>
<text x='760' y='422' transform='rotate(0 760 422)' font-size='10.5' fill='#606d60' text-anchor='middle' font-family='Liberation Sans' >Golf Club-Los Angelas</text>
<text x='1351' y='321' transform='rotate(0 1351 321)' font-size='11.5' fill='#606d60' text-anchor='middle' font-family='Liberation Sans' >Deane Dana Frndshp Cmmnty RGL Park</text>
<text x='1280' y='504' transform='rotate(0 1280 504)' font-size='10.5' fill='#606d60' text-anchor='middle' font-family='Liberation Sans' >Palos Verdes Shores</text>
<text x='1057' y='235' transform='rotate(0 1057 235)' font-size='10' fill='#8a7a6a' text-anchor='middle' font-family='Liberation Sans' >Marymount</text>
<text x='1057' y='247' transform='rotate(0 1057 247)' font-size='10' fill='#8a7a6a' text-anchor='middle' font-family='Liberation Sans' >College</text>
<text x='1132' y='188' transform='rotate(0 1132 188)' font-size='9' fill='#8a7a6a' text-anchor='middle' font-family='Liberation Sans' >EAST RANCHO PALOS</text>
<text x='1132' y='198' transform='rotate(0 1132 198)' font-size='9' fill='#8a7a6a' text-anchor='middle' font-family='Liberation Sans' >VERDES</text>
<rect x='1454' y='263' width='21' height='14' rx='3' fill='#fff' stroke='#888' stroke-width='1'/>
<text x='1464.5' y='274' transform='rotate(0 1464.5 274)' font-size='10' fill='#222' text-anchor='middle' font-family='Liberation Sans' font-weight='bold'>213</text>
<rect x='1562' y='553' width='10' height='14' rx='3' fill='#fff' stroke='#888' stroke-width='1'/>
<rect x='1133' y='383' width='12' height='12' fill='#ff0000' stroke='#222' stroke-width='1'/>
<rect x='709' y='155' width='395' height='27' fill='#3f64a0' fill-opacity='0.82'/>
<rect x='709' y='182' width='30' height='109' fill='#3f64a0' fill-opacity='0.82'/>
<text x='810' y='173' font-size='11.5' font-weight='bold' fill='#fff' text-anchor='middle' font-family='Liberation Sans'>Road</text>
<path d='M806 179.5 l4-4 4 4z' fill='#c9d6ea'/>
<text x='864' y='173' font-size='11.5' fill='#eef2f8' text-anchor='middle' font-family='Liberation Sans'>Aerial</text>
<text x='929' y='173' font-size='11.5' fill='#eef2f8' text-anchor='middle' font-family='Liberation Sans'>Bird's eye</text>
<rect x='969' y='162' width='1' height='14' fill='#9fb2d0'/><rect x='1018' y='162' width='1' height='14' fill='#9fb2d0'/>
<text x='994' y='173' font-size='11.5' font-weight='bold' fill='#9a9a9a' text-anchor='middle' font-family='Liberation Sans'>Labels</text>
<path d='M990 179.5 l4-4 4 4z' fill='#a49a8a'/>
<text x='1091' y='172' font-size='11' fill='#fff' text-anchor='middle' font-family='Liberation Sans'>&lt;&lt;</text>
<defs><radialGradient id='cmp' cx='0.45' cy='0.35' r='0.7'><stop offset='0' stop-color='#6d9ae0'/><stop offset='1' stop-color='#1d4c9c'/></radialGradient></defs>
<circle cx='747.5' cy='192.5' r='22' fill='#f2f4f8' stroke='#9ab' stroke-width='1'/>
<circle cx='747.5' cy='192.5' r='19.5' fill='url(#cmp)'/>
<path d='M747.5 176 l-4 5h2.5v5h3v-5h2.5z M747.5 209 l-4 -5h2.5v-5h3v5h2.5z M731 192.5 l5 -4v2.5h5v3h-5v2.5z M764 192.5 l-5 -4v2.5h-5v3h5v2.5z' fill='#fff'/>
<circle cx='725' cy='242' r='4.5' fill='none' stroke='#d8e4f4' stroke-width='1.5'/><path d='M722.5 242h5M725 239.5v5' stroke='#d8e4f4' stroke-width='1.3'/><path d='M722 245.5l-4 4' stroke='#5aa0e0' stroke-width='2'/>
<circle cx='725' cy='269' r='4.5' fill='none' stroke='#d8e4f4' stroke-width='1.5'/><path d='M722.5 269h5' stroke='#d8e4f4' stroke-width='1.3'/><path d='M722 272.5l-4 4' stroke='#5aa0e0' stroke-width='2'/>
<path d='M716.2 595 l4.4 1.5 v14 l8.4 -4.8 -4.2 -2 -1.8 -4.6 11.2 4 v5.6 l-13 7.6 -5 -3.2z' fill='#4e4e4e' stroke='#fff' stroke-width='1.4' paint-order='stroke' stroke-linejoin='round'/>
<text x='740.5' y='613' font-size='19.5' fill='#4a4a4a' font-family='Liberation Sans' stroke='#fff' stroke-width='1.6' paint-order='stroke' letter-spacing='0.4'>bing</text>
<text x='1558' y='594' font-size='14' fill='#111' text-anchor='end' font-family='Liberation Serif'>600 yds</text>
<rect x='1419' y='597' width='139' height='5' fill='#b8d4f4' stroke='#222' stroke-width='1'/>
<text x='1558' y='616' font-size='8.5' fill='#333' text-anchor='end' font-family='Liberation Serif' stroke='#ecebe7' stroke-width='2' paint-order='stroke'>© 2014 Microsoft Corporation   © 2010 NAVTEQ   © AND</text>
</svg>
<svg class='a' style='left:709px;top:627px' width='860' height='268' viewBox='709 627 860 268'>
<defs><linearGradient id='pg' x1='0' y1='0' x2='0' y2='1'><stop offset='0' stop-color='#f7f7f8'/><stop offset='1' stop-color='#e4e4e6'/></linearGradient></defs>
<rect x='709.5' y='627.5' width='859' height='136' fill='#fff' stroke='#8c8c8c' stroke-width='1.6'/>
<rect x='762.5' y='638.5' width='714' height='114' fill='url(#pg)' stroke='#c4c4c8' stroke-width='1'/>
<line x1='763' x2='1476' y1='656.3' y2='656.3' stroke='#d2d2d6' stroke-width='1'/>
<line x1='757' x2='763' y1='656.3' y2='656.3' stroke='#888' stroke-width='1'/>
<line x1='763' x2='1476' y1='684.5' y2='684.5' stroke='#d2d2d6' stroke-width='1'/>
<line x1='757' x2='763' y1='684.5' y2='684.5' stroke='#888' stroke-width='1'/>
<line x1='763' x2='1476' y1='712.9' y2='712.9' stroke='#d2d2d6' stroke-width='1'/>
<line x1='757' x2='763' y1='712.9' y2='712.9' stroke='#888' stroke-width='1'/>
<line x1='763' x2='1476' y1='741' y2='741' stroke='#d2d2d6' stroke-width='1'/>
<line x1='757' x2='763' y1='741' y2='741' stroke='#888' stroke-width='1'/>
<line x1='762.5' x2='762.5' y1='638' y2='753' stroke='#8a8a8a' stroke-width='1.2'/>
<text x='752' y='660.3' font-size='11' fill='#222' text-anchor='end' font-family='Liberation Sans'>0.6</text>
<text x='752' y='688.5' font-size='11' fill='#222' text-anchor='end' font-family='Liberation Sans'>0.3</text>
<text x='752' y='716.9' font-size='11' fill='#222' text-anchor='end' font-family='Liberation Sans'>0</text>
<text x='752' y='745' font-size='11' fill='#222' text-anchor='end' font-family='Liberation Sans'>-0.3</text>
<text x='725' y='695' transform='rotate(-90 725 695)' font-size='10' font-weight='bold' fill='#858585' text-anchor='middle' font-family='Liberation Sans'>G-Force</text>
<line x1='763' x2='1476' y1='661.5' y2='661.5' stroke='#f01010' stroke-width='1.2' stroke-dasharray='1.2 1.3'/>
<polyline points='804,721.5 805,723.1 806,723.1 807,719.3 808,727.2 809,721.4 810,718.5 811,722.2 812,720.0 813,723.5 814,719.9 815,721.1 816,718.9 817,719.4 818,720.0 819,723.9 820,724.7 821,724.7 822,722.1 823,725.1 824,719.9 825,720.9 826,724.9 827,724.0 828,721.5 829,719.7 830,720.9 831,719.1 832,716.2 833,720.7 834,716.9 835,718.4 836,716.0 837,717.2 838,720.0 839,720.9 840,715.3 841,716.2 842,717.0 843,717.1 844,719.1 845,713.8 846,716.9 847,722.7 848,712.5 849,716.0 850,721.3 851,718.4 852,717.0 853,715.7 854,718.7 855,721.3 856,725.3 857,721.2 858,724.6 859,720.2 860,729.6 861,715.6 862,724.5 863,722.1 864,719.0 865,716.8 866,716.6 867,724.6 868,718.8 869,721.9 870,727.1 871,727.4 872,726.5 873,724.8 874,725.3 875,723.1 876,727.1 877,723.3 878,727.3 879,731.2 880,727.1 881,725.2 882,734.2 883,725.6 884,727.6 885,719.7 886,727.3 887,735.7 888,734.3 889,735.7 890,727.0 891,732.7 892,728.4 893,733.2 894,733.3 895,734.6 896,729.4 897,730.0 898,733.4 899,735.1 900,731.5 901,730.2 902,731.3 903,733.1 904,737.7 905,740.9 906,736.5 907,733.6 908,736.3 909,739.7 910,737.4 911,736.8 912,737.7 913,746.5 914,742.0 915,742.6 916,738.3 917,744.7 918,747.2 919,738.1 920,739.6 921,736.7 922,742.7 923,735.2 924,739.3 925,738.0 926,738.5 927,741.6 928,733.1 929,736.9 930,736.8 931,738.2 932,735.0 933,738.5 934,739.9 935,742.5 936,737.1 937,735.1 938,733.7 939,735.5 940,730.7 941,736.9 942,737.6 943,731.8 944,734.9 945,734.2 946,728.8 947,737.1 948,730.1 949,734.8 950,730.9 951,731.6 952,735.5 953,734.3 954,723.4 955,727.8 956,729.6 957,722.9 958,730.3 959,725.3 960,729.8 961,728.0 962,728.6 963,728.8 964,722.9 965,725.5 966,728.5 967,730.6 968,726.4 969,725.1 970,720.6 971,719.7 972,727.9 973,727.4 974,721.5 975,728.3 976,716.5 977,721.8 978,722.6 979,723.5 980,723.2 981,722.1 982,719.5 983,724.9 984,724.3 985,724.7 986,723.3 987,717.9 988,718.1 989,725.6 990,719.9 991,715.7 992,719.8 993,719.6 994,716.5 995,721.3 996,716.0 997,714.9 998,714.5 999,714.9 1000,718.5 1001,716.2 1002,719.0 1003,713.8 1004,721.4 1005,720.8 1006,718.5 1007,722.2 1008,717.2 1009,709.9 1010,704.5 1011,716.0 1012,709.6 1013,713.1 1014,716.7 1015,715.2 1016,712.3 1017,714.4 1018,722.0 1019,715.7 1020,717.4 1021,718.8 1022,717.4 1023,717.7 1024,720.6 1025,720.5 1026,717.5 1027,725.9 1028,718.2 1029,712.7 1030,716.3 1031,715.2 1032,719.8 1033,719.9 1034,726.0 1035,716.7 1036,723.2 1037,718.1 1038,720.2 1039,722.4 1040,725.4 1041,722.2 1042,722.8 1043,719.3 1044,711.7 1045,724.1 1046,721.1 1047,720.5 1048,722.2 1049,720.3 1050,718.3 1051,714.7 1052,716.5 1053,721.0 1054,709.6 1055,720.1 1056,721.6 1057,719.5 1058,717.2 1059,722.7 1060,717.3 1061,721.7 1062,714.8 1063,716.5 1064,716.2 1065,710.1 1066,719.0 1067,717.1 1068,714.9 1069,715.7 1070,718.9 1071,711.4 1072,709.9 1073,709.2 1074,713.5 1075,713.0 1076,714.0 1077,711.8 1078,717.7 1079,709.5 1080,713.8 1081,713.1 1082,708.5 1083,710.1 1084,715.2 1085,712.2 1086,706.7 1087,709.0 1088,710.0 1089,712.6 1090,714.8 1091,709.8 1092,710.0 1093,711.9 1094,707.8 1095,709.1 1096,707.9 1097,709.0 1098,711.5 1099,712.8 1100,706.0 1101,707.8 1102,699.0 1103,707.3 1104,701.1 1105,707.0 1106,706.4 1107,705.4 1108,693.7 1109,703.9 1110,699.5 1111,695.9 1112,700.1 1113,699.0 1114,694.3 1115,698.9 1116,694.9 1117,693.6 1118,702.0 1119,693.9 1120,697.7 1121,694.9 1122,691.5 1123,694.5 1124,700.6 1125,688.6 1126,698.7 1127,689.9 1128,684.9 1129,687.0 1130,689.4 1131,689.9 1132,687.8 1133,680.6 1134,683.3 1135,690.0 1136,683.5 1137,682.2 1138,685.4 1139,691.1 1140,688.8 1141,686.1 1142,687.0 1143,682.0 1144,686.2 1145,680.7 1146,682.4 1147,683.8 1148,679.0 1149,683.7 1150,680.0 1151,667.9 1152,671.4 1153,665.3 1154,665.6 1155,663.7 1156,664.0 1157,666.5 1158,663.7 1159,672.6 1160,661.1 1161,658.1 1162,666.0 1163,657.1 1164,666.3 1165,663.9 1166,665.9 1167,665.8 1168,672.5 1169,667.5 1170,670.3 1171,669.9 1172,670.8 1173,663.6 1174,664.8 1175,668.1 1176,663.1 1177,678.6 1178,663.2 1179,660.2 1180,653.7 1181,663.1 1182,658.8 1183,665.8 1184,659.8 1185,668.5 1186,662.1 1187,659.0 1188,654.2 1189,663.7 1190,657.7 1191,653.2 1192,654.9 1193,664.3 1194,649.8 1195,660.4 1196,663.6 1197,660.1 1198,654.4 1199,661.4 1200,658.9 1201,644.4 1202,660.7 1203,656.0 1204,651.5 1205,663.5 1206,655.0 1207,654.4 1208,660.7 1209,669.4 1210,653.3 1211,651.6 1212,655.9 1213,661.9 1214,653.0 1215,657.1 1216,655.9 1217,657.1 1218,658.1 1219,659.7 1220,656.2 1221,657.9 1222,658.1 1223,649.1 1224,653.1 1225,654.3 1226,656.4 1227,653.8 1228,655.5 1229,658.2 1230,665.6 1231,659.1 1232,662.8 1233,662.7 1234,657.3 1235,661.0 1236,661.6 1237,656.8 1238,657.4 1239,658.4 1240,659.6 1241,666.4 1242,663.5 1243,665.7 1244,663.7 1245,660.6 1246,668.8 1247,659.0 1248,667.1 1249,660.5 1250,660.5 1251,662.0 1252,664.5 1253,664.7 1254,671.9 1255,662.9 1256,665.3 1257,663.4 1258,666.4 1259,671.3 1260,665.6 1261,662.1 1262,664.1 1263,669.0 1264,673.1 1265,661.7 1266,669.7 1267,664.1 1268,662.3 1269,667.0 1270,674.9 1271,658.0 1272,670.0 1273,666.5 1274,672.6 1275,663.0 1276,668.6 1277,662.8 1278,662.9 1279,672.4 1280,673.2 1281,676.6 1282,674.8 1283,664.0 1284,662.1 1285,665.6 1286,673.3 1287,672.4 1288,671.4 1289,670.9 1290,674.1 1291,678.3 1292,670.6 1293,675.1 1294,670.4 1295,671.4 1296,676.4 1297,676.9 1298,679.0 1299,678.8 1300,680.3 1301,678.6 1302,677.8 1303,683.9 1304,686.2 1305,681.8 1306,688.2 1307,680.3 1308,687.7 1309,686.0 1310,683.3 1311,685.3 1312,694.5 1313,691.3 1314,689.1 1315,686.7 1316,682.0 1317,685.8 1318,682.3 1319,685.4 1320,681.6 1321,683.7 1322,688.3 1323,690.9 1324,682.5 1325,679.1 1326,691.2 1327,681.9 1328,681.8 1329,685.6 1330,682.1 1331,684.7 1332,690.0 1333,683.4 1334,687.2 1335,682.9 1336,680.4 1337,689.0 1338,684.3 1339,675.3 1340,688.0 1341,690.0 1342,686.5 1343,696.9 1344,678.3 1345,675.1 1346,683.5 1347,688.2 1348,687.5 1349,683.1 1350,692.6 1351,678.5 1352,673.4 1353,680.7 1354,672.0 1355,683.7 1356,669.3 1357,677.6 1358,666.9 1359,672.5 1360,661.6 1361,659.1 1362,666.6 1363,670.0 1364,673.2 1365,661.8 1366,668.6 1367,674.9 1368,665.4 1369,661.4 1370,671.5 1371,671.4 1372,667.7 1373,675.9 1374,679.7 1375,672.6 1376,683.4 1377,679.8 1378,685.0 1379,679.7 1380,681.2 1381,680.9 1382,677.2 1383,687.3 1384,673.7 1385,672.6 1386,678.6 1387,683.8 1388,685.1 1389,678.2 1390,678.5 1391,678.0 1392,672.0 1393,673.5 1394,681.0 1395,681.5 1396,675.0 1397,676.2 1398,681.6 1399,672.6 1400,672.6 1401,673.7 1402,670.6 1403,681.7 1404,673.3 1405,673.5 1406,675.9 1407,677.2 1408,677.4 1409,677.1 1410,677.6 1411,679.4 1412,676.7 1413,678.5 1414,673.4 1415,682.5 1416,673.8 1417,678.9 1418,678.7 1419,679.1 1420,681.3 1421,679.3 1422,682.0 1423,677.7 1424,685.5 1425,684.2 1426,679.4 1427,681.1 1428,682.3 1429,681.3 1430,683.4 1431,681.8 1432,683.0 1433,685.6 1434,687.3' fill='none' stroke='#7a7a7a' stroke-width='1.2' shape-rendering='crispEdges'/>
<polyline points='804,714.4 805,716.9 806,716.9 807,708.9 808,709.7 809,708.9 810,708.5 811,711.2 812,709.4 813,703.8 814,711.6 815,711.3 816,711.2 817,708.2 818,706.4 819,707.2 820,700.5 821,710.2 822,702.1 823,716.6 824,710.6 825,708.2 826,708.5 827,706.2 828,708.4 829,706.9 830,711.7 831,706.3 832,710.4 833,709.4 834,714.9 835,707.2 836,706.0 837,708.6 838,701.3 839,703.0 840,708.7 841,704.4 842,709.4 843,704.5 844,712.7 845,703.7 846,703.6 847,711.3 848,703.1 849,710.3 850,708.2 851,708.6 852,719.8 853,709.7 854,709.6 855,708.8 856,714.5 857,711.5 858,708.0 859,708.4 860,710.3 861,716.5 862,714.4 863,707.9 864,704.3 865,706.2 866,707.6 867,707.3 868,708.4 869,709.4 870,709.3 871,706.2 872,711.9 873,711.7 874,709.7 875,716.3 876,707.7 877,715.8 878,716.3 879,709.5 880,709.6 881,717.0 882,706.2 883,716.7 884,711.8 885,707.6 886,712.3 887,718.5 888,711.3 889,720.0 890,710.7 891,717.1 892,712.3 893,712.8 894,706.5 895,711.6 896,715.4 897,712.9 898,714.7 899,714.0 900,716.1 901,717.0 902,712.3 903,712.2 904,708.8 905,713.9 906,713.3 907,712.5 908,711.4 909,712.1 910,713.0 911,716.9 912,707.5 913,712.7 914,709.7 915,707.6 916,710.9 917,712.7 918,713.4 919,718.3 920,716.7 921,717.1 922,712.2 923,716.4 924,713.7 925,714.0 926,712.3 927,708.8 928,712.7 929,717.6 930,711.4 931,710.9 932,712.8 933,711.8 934,712.3 935,710.4 936,709.6 937,710.3 938,707.0 939,706.7 940,709.7 941,715.9 942,709.1 943,703.0 944,712.3 945,708.6 946,709.9 947,713.0 948,715.1 949,713.4 950,714.5 951,713.4 952,709.6 953,713.3 954,717.9 955,712.5 956,713.2 957,716.4 958,711.7 959,711.6 960,717.8 961,714.9 962,714.1 963,717.0 964,710.2 965,711.5 966,717.1 967,709.2 968,714.7 969,714.5 970,715.8 971,711.7 972,716.0 973,709.1 974,718.8 975,712.2 976,711.4 977,711.5 978,712.6 979,718.7 980,714.8 981,707.5 982,710.2 983,713.4 984,715.5 985,712.4 986,713.9 987,718.3 988,716.9 989,715.6 990,719.8 991,718.0 992,714.0 993,711.4 994,717.5 995,719.9 996,714.5 997,713.1 998,718.8 999,715.4 1000,720.3 1001,722.9 1002,714.8 1003,715.9 1004,718.6 1005,719.0 1006,712.4 1007,714.9 1008,714.9 1009,715.7 1010,713.0 1011,714.2 1012,715.1 1013,716.6 1014,712.0 1015,717.6 1016,715.1 1017,719.6 1018,718.6 1019,718.0 1020,718.5 1021,719.6 1022,715.9 1023,715.5 1024,718.0 1025,715.9 1026,716.7 1027,720.9 1028,718.7 1029,717.0 1030,716.9 1031,719.8 1032,716.0 1033,715.8 1034,714.3 1035,714.3 1036,712.0 1037,722.4 1038,718.9 1039,715.8 1040,714.6 1041,721.0 1042,718.2 1043,717.4 1044,715.7 1045,718.8 1046,720.8 1047,726.1 1048,718.4 1049,727.8 1050,724.1 1051,721.0 1052,717.0 1053,718.7 1054,724.6 1055,722.6 1056,720.8 1057,722.4 1058,720.0 1059,718.4 1060,718.8 1061,716.1 1062,718.3 1063,714.7 1064,712.9 1065,715.1 1066,715.3 1067,713.4 1068,717.0 1069,716.5 1070,713.5 1071,715.1 1072,713.5 1073,724.0 1074,714.2 1075,719.2 1076,714.8 1077,712.5 1078,717.7 1079,714.2 1080,714.1 1081,714.9 1082,715.7 1083,718.0 1084,714.3 1085,716.2 1086,716.6 1087,722.0 1088,719.7 1089,721.1 1090,716.5 1091,726.5 1092,724.8 1093,714.0 1094,718.9 1095,718.5 1096,714.4 1097,718.1 1098,723.1 1099,718.4 1100,715.7 1101,722.6 1102,718.7 1103,716.8 1104,717.7 1105,722.8 1106,721.0 1107,720.4 1108,723.5 1109,720.5 1110,715.8 1111,718.7 1112,716.6 1113,725.3 1114,722.0 1115,721.3 1116,723.0 1117,714.3 1118,715.3 1119,717.6 1120,717.4 1121,716.8 1122,720.9 1123,722.0 1124,717.9 1125,718.7 1126,720.9 1127,716.8 1128,720.7 1129,716.5 1130,712.9 1131,716.9 1132,718.5 1133,722.8 1134,722.3 1135,718.0 1136,719.9 1137,716.1 1138,718.5 1139,716.5 1140,720.0 1141,717.2 1142,728.3 1143,726.3 1144,724.4 1145,720.0 1146,727.0 1147,721.7 1148,720.2 1149,725.6 1150,725.4 1151,722.7 1152,722.7 1153,727.0 1154,722.7 1155,728.4 1156,728.0 1157,719.6 1158,725.6 1159,724.5 1160,724.7 1161,724.8 1162,734.2 1163,728.8 1164,724.8 1165,730.8 1166,729.7 1167,726.9 1168,721.9 1169,732.2 1170,719.7 1171,727.4 1172,720.7 1173,729.4 1174,726.0 1175,719.8 1176,723.4 1177,715.1 1178,720.9 1179,719.2 1180,723.0 1181,717.4 1182,725.0 1183,728.7 1184,718.4 1185,729.3 1186,711.6 1187,729.6 1188,713.6 1189,724.5 1190,717.6 1191,717.4 1192,713.0 1193,712.3 1194,726.0 1195,724.0 1196,720.4 1197,725.7 1198,715.6 1199,715.2 1200,713.7 1201,725.0 1202,714.9 1203,719.4 1204,713.0 1205,713.4 1206,720.6 1207,721.0 1208,727.5 1209,718.0 1210,720.4 1211,731.2 1212,718.8 1213,722.5 1214,727.8 1215,718.0 1216,725.6 1217,718.5 1218,713.0 1219,717.5 1220,715.3 1221,717.8 1222,712.1 1223,716.1 1224,719.0 1225,722.9 1226,717.6 1227,717.9 1228,719.5 1229,706.8 1230,718.0 1231,717.2 1232,719.6 1233,718.1 1234,714.5 1235,718.0 1236,722.9 1237,720.2 1238,716.4 1239,714.5 1240,727.1 1241,709.1 1242,729.9 1243,712.9 1244,715.6 1245,720.4 1246,719.0 1247,720.5 1248,723.1 1249,715.9 1250,717.2 1251,723.0 1252,716.5 1253,726.3 1254,718.2 1255,706.6 1256,716.9 1257,711.8 1258,709.0 1259,712.1 1260,712.5 1261,716.5 1262,714.0 1263,719.3 1264,713.0 1265,724.5 1266,712.8 1267,712.9 1268,720.7 1269,718.8 1270,717.3 1271,716.0 1272,724.6 1273,716.4 1274,716.1 1275,716.3 1276,712.7 1277,726.6 1278,714.9 1279,729.1 1280,720.1 1281,713.6 1282,716.4 1283,714.9 1284,718.6 1285,718.6 1286,721.0 1287,714.4 1288,718.2 1289,713.2 1290,716.4 1291,715.1 1292,716.8 1293,708.8 1294,719.5 1295,720.6 1296,712.3 1297,712.6 1298,718.3 1299,716.1 1300,713.2 1301,719.8 1302,713.9 1303,717.9 1304,714.1 1305,714.8 1306,719.7 1307,716.3 1308,714.5 1309,709.9 1310,711.3 1311,712.1 1312,716.6 1313,708.6 1314,712.9 1315,714.5 1316,711.2 1317,716.6 1318,713.4 1319,708.0 1320,700.6 1321,709.1 1322,709.8 1323,709.5 1324,714.8 1325,707.3 1326,716.8 1327,718.6 1328,709.4 1329,713.3 1330,716.4 1331,717.6 1332,722.8 1333,708.7 1334,705.3 1335,713.7 1336,718.0 1337,711.3 1338,715.9 1339,703.1 1340,715.1 1341,700.0 1342,700.3 1343,711.8 1344,704.2 1345,705.7 1346,713.9 1347,708.8 1348,703.4 1349,709.9 1350,709.9 1351,700.4 1352,703.3 1353,708.0 1354,700.2 1355,709.8 1356,703.5 1357,707.6 1358,705.7 1359,704.8 1360,703.1 1361,713.3 1362,706.3 1363,711.6 1364,704.6 1365,712.6 1366,716.6 1367,707.0 1368,710.3 1369,704.3 1370,713.7 1371,699.6 1372,702.5 1373,718.6 1374,705.7 1375,719.4 1376,692.8 1377,703.2 1378,701.6 1379,715.6 1380,698.0 1381,700.5 1382,700.1 1383,701.4 1384,697.0 1385,698.5 1386,709.9 1387,711.9 1388,700.5 1389,706.2 1390,703.5 1391,705.6 1392,711.7 1393,706.7 1394,706.9 1395,709.5 1396,703.5 1397,710.4 1398,711.9 1399,712.8 1400,709.7 1401,707.5 1402,713.4 1403,707.9 1404,709.0 1405,705.8 1406,706.8 1407,698.6 1408,709.4 1409,709.0 1410,706.4 1411,711.8 1412,712.1 1413,707.1 1414,712.0 1415,713.2 1416,708.7 1417,708.4 1418,710.7 1419,708.2 1420,709.9 1421,707.8 1422,712.3 1423,708.3 1424,713.7 1425,713.6 1426,713.3 1427,712.4 1428,704.9 1429,705.4 1430,703.0 1431,701.6 1432,701.8 1433,702.3 1434,697.3' fill='none' stroke='#0000f0' stroke-width='1.3' shape-rendering='crispEdges'/>
<line x1='1152.5' x2='1152.5' y1='639' y2='752' stroke='#e01010' stroke-width='1.6'/>
<text x='1473' y='670.5' font-size='9.5' fill='#111' text-anchor='end' font-family='Liberation Sans'>0.55</text>
<rect x='1487.5' y='638.5' width='70' height='39' fill='url(#pg)' stroke='#c6c6ca' stroke-width='1'/>
<line x1='1490' x2='1510' y1='648.5' y2='648.5' stroke='#0000f0' stroke-width='1.4'/>
<line x1='1490' x2='1510' y1='666.5' y2='666.5' stroke='#808080' stroke-width='1.4'/>
<text x='1513' y='652.5' font-size='11' fill='#1a1a2a' font-family='Liberation Sans'>Forward</text>
<text x='1513' y='670.5' font-size='11' fill='#1a1a2a' font-family='Liberation Sans'>Lateral</text>
<rect x='709.5' y='768.5' width='859' height='126' fill='#fff' stroke='#8c8c8c' stroke-width='1.6'/>
<rect x='756' y='789.5' width='802' height='44.3' fill='url(#pg)' stroke='#cfcfd3' stroke-width='1'/>
<line x1='756' x2='1558' y1='813.2' y2='813.2' stroke='#d2d2d6' stroke-width='1'/>
<line x1='750' x2='756' y1='792.3' y2='792.3' stroke='#888' stroke-width='1'/>
<line x1='750' x2='756' y1='813.2' y2='813.2' stroke='#888' stroke-width='1'/>
<line x1='750' x2='756' y1='833.8' y2='833.8' stroke='#888' stroke-width='1'/>
<line x1='755.8' x2='755.8' y1='789' y2='834' stroke='#8a8a8a' stroke-width='1.2'/>
<line x1='755' x2='1558' y1='833.8' y2='833.8' stroke='#8a8a8a' stroke-width='1.6'/>
<text x='743' y='796.3' font-size='11' fill='#222' text-anchor='end' font-family='Liberation Sans'>40</text>
<text x='743' y='817.2' font-size='11' fill='#222' text-anchor='end' font-family='Liberation Sans'>20</text>
<text x='743' y='837.8' font-size='11' fill='#222' text-anchor='end' font-family='Liberation Sans'>0</text>
<line x1='755.8' x2='755.8' y1='834' y2='840' stroke='#888' stroke-width='1'/>
<text x='755.8' y='869' font-size='11' fill='#222' text-anchor='middle' font-family='Liberation Sans'>0</text>
<line x1='850.1' x2='850.1' y1='834' y2='840' stroke='#888' stroke-width='1'/>
<text x='850.1' y='854' font-size='11' fill='#222' text-anchor='middle' font-family='Liberation Sans'>2</text>
<line x1='944.4' x2='944.4' y1='834' y2='840' stroke='#888' stroke-width='1'/>
<text x='944.4' y='869' font-size='11' fill='#222' text-anchor='middle' font-family='Liberation Sans'>4</text>
<line x1='1038.7' x2='1038.7' y1='834' y2='840' stroke='#888' stroke-width='1'/>
<text x='1038.7' y='854' font-size='11' fill='#222' text-anchor='middle' font-family='Liberation Sans'>6</text>
<line x1='1133.0' x2='1133.0' y1='834' y2='840' stroke='#888' stroke-width='1'/>
<text x='1133.0' y='869' font-size='11' fill='#222' text-anchor='middle' font-family='Liberation Sans'>8</text>
<line x1='1227.3' x2='1227.3' y1='834' y2='840' stroke='#888' stroke-width='1'/>
<text x='1227.3' y='854' font-size='11' fill='#222' text-anchor='middle' font-family='Liberation Sans'>10</text>
<line x1='1321.6' x2='1321.6' y1='834' y2='840' stroke='#888' stroke-width='1'/>
<text x='1321.6' y='869' font-size='11' fill='#222' text-anchor='middle' font-family='Liberation Sans'>12</text>
<line x1='1415.9' x2='1415.9' y1='834' y2='840' stroke='#888' stroke-width='1'/>
<text x='1415.9' y='854' font-size='11' fill='#222' text-anchor='middle' font-family='Liberation Sans'>14</text>
<line x1='1510.2' x2='1510.2' y1='834' y2='840' stroke='#888' stroke-width='1'/>
<text x='1510.2' y='869' font-size='11' fill='#222' text-anchor='middle' font-family='Liberation Sans'>16</text>
<text x='1156' y='885' font-size='10' font-weight='bold' fill='#858585' text-anchor='middle' font-family='Liberation Sans'>SEC</text>
<text x='725' y='812' transform='rotate(-90 725 812)' font-size='10' font-weight='bold' fill='#858585' text-anchor='middle' font-family='Liberation Sans'>Speed</text>
<polyline points='802,798.4 900,795.5 1000,793.4 1038,793.2 1090,794.5 1132,795.2 1179,794 1230,797 1275,799.6 1320,803 1367.8,808.3 1415.7,808.3 1460,806 1510,803.4' fill='none' stroke='#3a6396' stroke-width='2'/>
<line x1='1132' y1='795' x2='1141' y2='787' stroke='#9a3a3a' stroke-width='1'/>
<circle cx='1132' cy='795.2' r='5.5' fill='#9b3535'/>
<rect x='1139.5' y='773.5' width='32' height='15' fill='#fff' stroke='#9b3535' stroke-width='1'/>
<text x='1155.5' y='785' font-size='11' fill='#7a2a2a' text-anchor='middle' font-family='Liberation Sans'>36.99</text>
</svg>
<div class='a' style='left:2px;top:902px;width:1574px;height:46px;background:#404040'></div>
<div class='a' style='left:26px;top:913px;width:150px;height:30px;background:#7c7e8b;color:#fff;font-size:11px;line-height:30px;text-align:center;letter-spacing:-0.2px'>Save</div>
<div class='a' style='left:189px;top:913px;width:150px;height:30px;background:#7c7e8b;color:#fff;font-size:11px;line-height:30px;text-align:center;letter-spacing:-0.2px'>Save and Return</div>
<div class='a' style='left:352px;top:913px;width:150px;height:30px;background:#7c7e8b;color:#fff;font-size:11px;line-height:30px;text-align:center;letter-spacing:-0.2px'>Export / Print</div>
<div class='a' style='left:515px;top:913px;width:150px;height:30px;background:#7c7e8b;color:#fff;font-size:11px;line-height:30px;text-align:center;letter-spacing:-0.2px'>Expand Reviews</div>
<div class='a' style='left:678px;top:913px;width:150px;height:30px;background:#7c7e8b;color:#fff;font-size:11px;line-height:30px;text-align:center;letter-spacing:-0.2px'>Collapse Reviews</div>
</body></html>
